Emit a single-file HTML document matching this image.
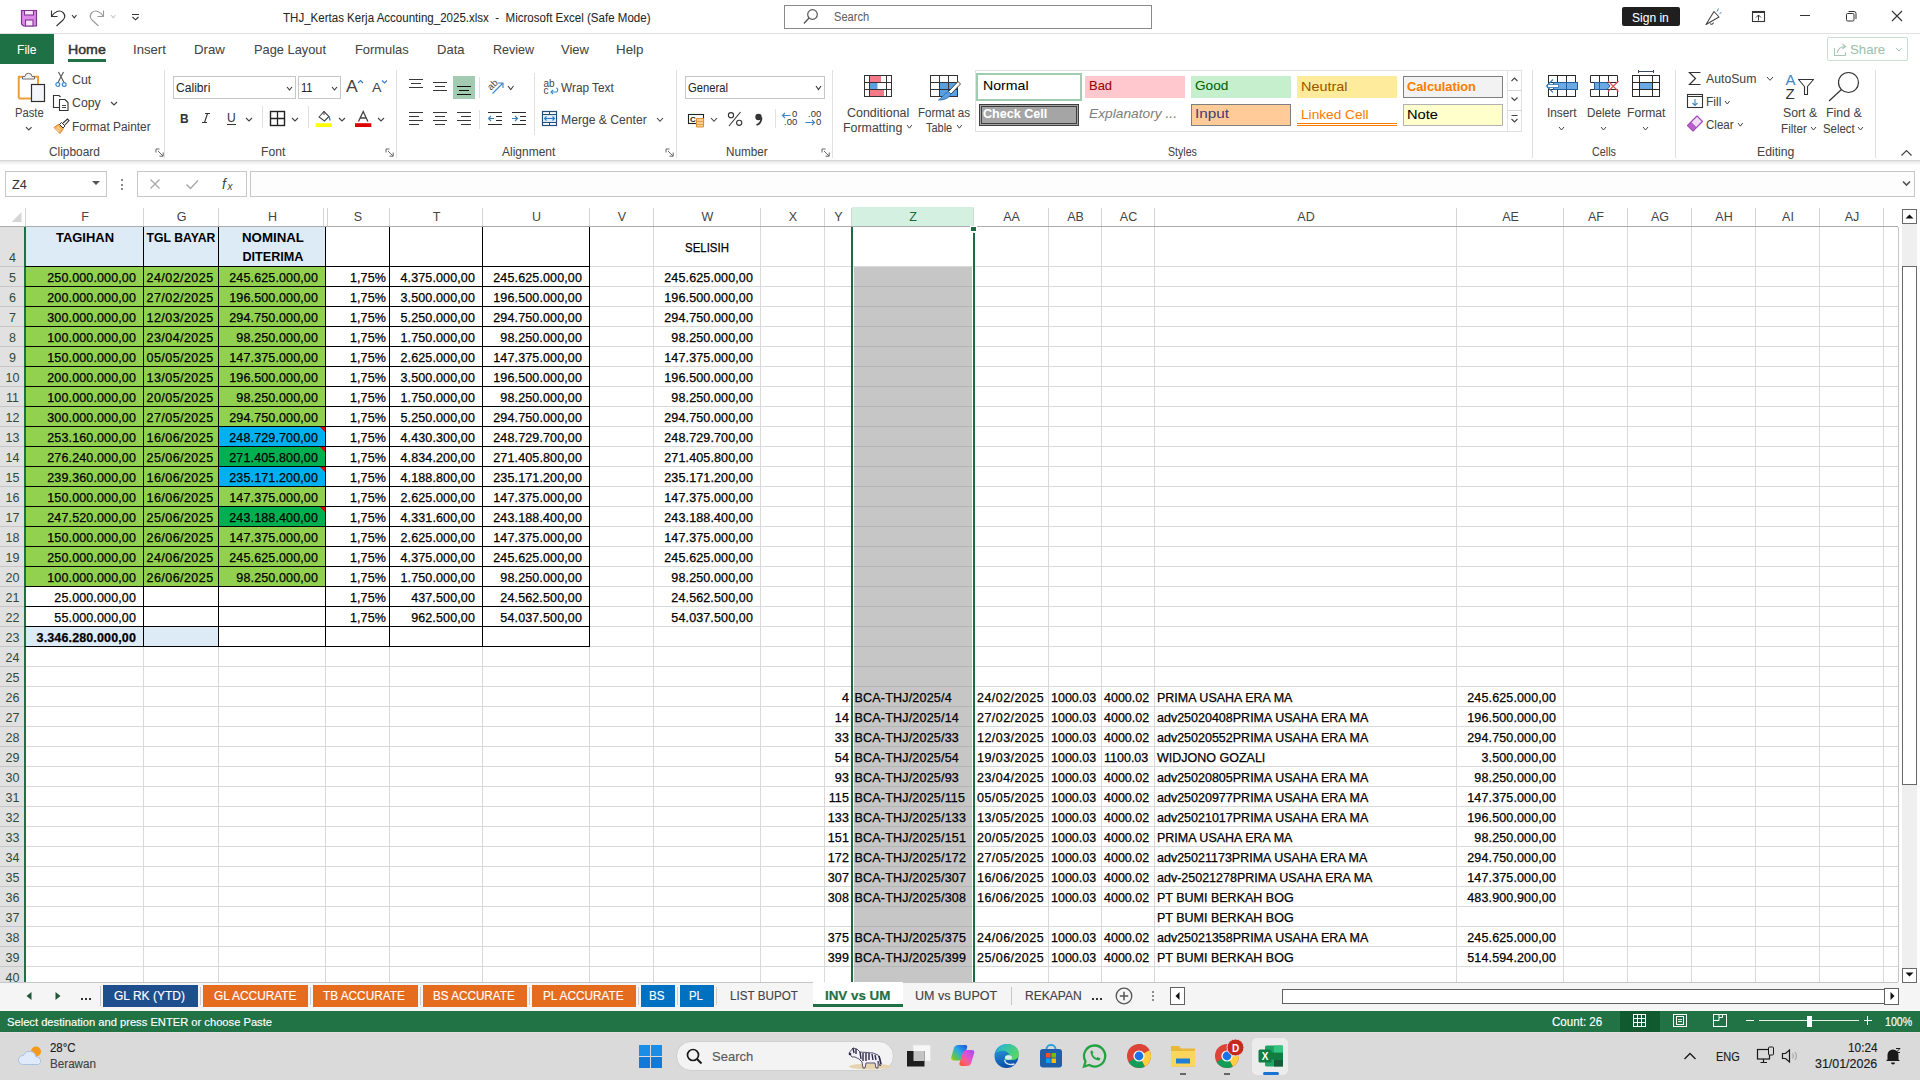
<!DOCTYPE html><html><head><meta charset="utf-8"><title>Excel</title><style>
html,body{margin:0;padding:0;width:1920px;height:1080px;overflow:hidden;background:#fff;font-family:"Liberation Sans",sans-serif;}
.t{position:absolute;white-space:nowrap;}
.r{position:absolute;}
.s{position:absolute;overflow:visible;}
</style></head><body>
<div class="r" style="left:0px;top:0px;width:1920px;height:33px;background:#ffffff;"></div>
<div class="r" style="left:0px;top:33px;width:1920px;height:1px;background:#e1e1e1;"></div>
<svg class="s" style="left:20px;top:9px;" width="18" height="18" viewBox="0 0 18 18"><path d="M1.5 1.5h15v15.5h-13l-2-2z" fill="#dc8ae8" stroke="#7e3590" stroke-width="1.2"/><rect x="4.5" y="1.5" width="9" height="4.5" fill="#f7e6f9" stroke="#7e3590" stroke-width="1.1"/><rect x="5.5" y="11" width="7.5" height="6" fill="#f7e6f9" stroke="#7e3590" stroke-width="1.1"/></svg>
<svg class="s" style="left:49px;top:8px;" width="18" height="20" viewBox="0 0 18 20"><path d="M2.5 2.5V8.5H8.5" fill="none" stroke="#333" stroke-width="1.1"/><path d="M2.5 8.5C5.5 3.5 10.5 1.5 14 4.5 16.5 7 16 10 14 12L7.5 18" fill="none" stroke="#333" stroke-width="1.1"/></svg>
<svg class="s" style="left:70.5px;top:14px;" width="6.5" height="4.8" viewBox="0 0 6.5 4.8"><path d="M1 1l2.25 2.8 2.25 -2.8" fill="none" stroke="#333" stroke-width="1.1"/></svg>
<svg class="s" style="left:88px;top:8px;" width="18" height="20" viewBox="0 0 18 20"><path d="M15.5 2.5V8.5H9.5" fill="none" stroke="#9a9a9a" stroke-width="1.1"/><path d="M15.5 8.5C12.5 3.5 7.5 1.5 4 4.5 1.5 7 2 10 4 12L10.5 18" fill="none" stroke="#9a9a9a" stroke-width="1.1"/></svg>
<svg class="s" style="left:109.5px;top:14px;" width="6.5" height="4.8" viewBox="0 0 6.5 4.8"><path d="M1 1l2.25 2.8 2.25 -2.8" fill="none" stroke="#c8c8c8" stroke-width="1.1"/></svg>
<svg class="s" style="left:131px;top:13px;" width="9" height="8" viewBox="0 0 9 8"><path d="M1 1.5h7" stroke="#333" stroke-width="1"/><path d="M1.5 4l3 2.8 3-2.8" fill="none" stroke="#333" stroke-width="1.1"/></svg>
<div class="t" id="f1" style="left:283px;top:12.00px;font-size:12px;line-height:12px;color:#262626;transform:scaleX(0.9616);transform-origin:0 0;white-space:pre;-webkit-text-stroke:0.05px currentColor;">THJ_Kertas Kerja Accounting_2025.xlsx  -  Microsoft Excel (Safe Mode)</div>
<div class="r" style="left:784px;top:5px;width:368px;height:24px;background:#ffffff;border:1px solid #8a8a8a;box-sizing:border-box;"></div>
<svg class="s" style="left:802px;top:8px;" width="17" height="17" viewBox="0 0 17 17"><circle cx="10.5" cy="6.5" r="4.8" fill="none" stroke="#555" stroke-width="1.2"/><path d="M7 10L2 15.5" stroke="#555" stroke-width="1.3"/></svg>
<div class="t" id="f2" style="left:833.6999999999999px;top:11.00px;font-size:12px;line-height:12px;color:#606060;transform:scaleX(0.9256);transform-origin:0 0;-webkit-text-stroke:0.05px currentColor;">Search</div>
<div class="r" style="left:1622px;top:7px;width:58px;height:19px;background:#1f1f1f;border-radius:2px;"></div>
<div class="t" id="f3" style="left:1632.1000000000001px;top:12.00px;font-size:12.5px;line-height:12.5px;color:#ffffff;transform:scaleX(0.9625);transform-origin:0 0;-webkit-text-stroke:0.05px currentColor;">Sign in</div>
<svg class="s" style="left:1704px;top:8px;" width="20" height="19" viewBox="0 0 20 19"><path d="M2 16.5L10 3.5l5 5.5z" fill="none" stroke="#444" stroke-width="1.1" stroke-linejoin="round"/><path d="M6 15.5a2 2 0 0 0 3.5-1" fill="none" stroke="#444" stroke-width="1.1"/><path d="M13 3.5l1.2-2M15.5 5.5l2-1M14 1.5l.5-1" stroke="#3a86c8" stroke-width="1"/></svg>
<svg class="s" style="left:1751px;top:10px;" width="15" height="13" viewBox="0 0 15 13"><rect x="1.5" y="1.5" width="12" height="10" fill="none" stroke="#333" stroke-width="1.1"/><path d="M1.5 2.5h12" stroke="#333" stroke-width="1"/><path d="M7.5 10.5V5M5 7.5l2.5-2.5 2.5 2.5" fill="none" stroke="#333" stroke-width="1"/></svg>
<div class="r" style="left:1800px;top:15px;width:10px;height:1px;background:#333;"></div>
<svg class="s" style="left:1845px;top:10px;" width="12" height="12" viewBox="0 0 12 12"><rect x="1.5" y="3.5" width="7.5" height="7.5" rx="1.2" fill="none" stroke="#333" stroke-width="1"/><path d="M3.5 1.5h5.5a2 2 0 0 1 2 2v5.5" fill="none" stroke="#333" stroke-width="1"/></svg>
<svg class="s" style="left:1891px;top:10px;" width="12" height="12" viewBox="0 0 12 12"><path d="M1 1l10 10M11 1L1 11" stroke="#333" stroke-width="1.1"/></svg>
<div class="r" style="left:0px;top:34px;width:1920px;height:30px;background:#ffffff;"></div>
<div class="r" style="left:0px;top:34px;width:54px;height:30px;background:#1e7145;"></div>
<div class="t" id="f4" style="left:16.9px;top:43.00px;font-size:13px;line-height:13px;color:#ffffff;transform:scaleX(0.9306);transform-origin:0 0;-webkit-text-stroke:0.05px currentColor;">File</div>
<div class="t" id="f5" style="left:67.5px;top:43.00px;font-size:13px;line-height:13px;color:#333333;transform:scaleX(1.0897);transform-origin:0 0;-webkit-text-stroke:0.05px currentColor;-webkit-text-stroke:0.45px #333;">Home</div>
<div class="t" id="f6" style="left:132.9px;top:43.00px;font-size:13px;line-height:13px;color:#444444;transform:scaleX(1.0087);transform-origin:0 0;-webkit-text-stroke:0.05px currentColor;">Insert</div>
<div class="t" id="f7" style="left:193.70000000000002px;top:43.00px;font-size:13px;line-height:13px;color:#444444;transform:scaleX(1.0183);transform-origin:0 0;-webkit-text-stroke:0.05px currentColor;">Draw</div>
<div class="t" id="f8" style="left:253.6px;top:43.00px;font-size:13px;line-height:13px;color:#444444;transform:scaleX(0.9861);transform-origin:0 0;-webkit-text-stroke:0.05px currentColor;">Page Layout</div>
<div class="t" id="f9" style="left:354.7px;top:43.00px;font-size:13px;line-height:13px;color:#444444;transform:scaleX(0.9910);transform-origin:0 0;-webkit-text-stroke:0.05px currentColor;">Formulas</div>
<div class="t" id="f10" style="left:436.59999999999997px;top:43.00px;font-size:13px;line-height:13px;color:#444444;transform:scaleX(1.0011);transform-origin:0 0;-webkit-text-stroke:0.05px currentColor;">Data</div>
<div class="t" id="f11" style="left:492.9px;top:43.00px;font-size:13px;line-height:13px;color:#444444;transform:scaleX(0.9619);transform-origin:0 0;-webkit-text-stroke:0.05px currentColor;">Review</div>
<div class="t" id="f12" style="left:560.9px;top:43.00px;font-size:13px;line-height:13px;color:#444444;transform:scaleX(1.0017);transform-origin:0 0;-webkit-text-stroke:0.05px currentColor;">View</div>
<div class="t" id="f13" style="left:615.8px;top:43.00px;font-size:13px;line-height:13px;color:#444444;transform:scaleX(1.0280);transform-origin:0 0;-webkit-text-stroke:0.05px currentColor;">Help</div>
<div class="r" style="left:68px;top:59px;width:38px;height:3px;background:#1e7145;"></div>
<div class="r" style="left:1827px;top:37px;width:81px;height:24px;background:#ffffff;border:1px solid #c9e0d1;box-sizing:border-box;border-radius:2px;"></div>
<svg class="s" style="left:1833px;top:42px;" width="16" height="15" viewBox="0 0 16 15"><path d="M1.5 6v7.5h11V10" fill="none" stroke="#a9c8b4" stroke-width="1.1"/><path d="M4 11c1-4 4-6.5 8-6.5M9.5 2L12.5 4.5 9.5 7" fill="none" stroke="#a9c8b4" stroke-width="1.1"/></svg>
<div class="t" id="f14" style="left:1850.4px;top:43.00px;font-size:13px;line-height:13px;color:#9cc2aa;transform:scaleX(1.0143);transform-origin:0 0;-webkit-text-stroke:0.05px currentColor;">Share</div>
<svg class="s" style="left:1895px;top:47px;" width="8" height="5" viewBox="0 0 8 5"><path d="M1 1l3.0 3 3.0 -3" fill="none" stroke="#a9c8b4" stroke-width="1"/></svg>
<div class="r" style="left:0px;top:64px;width:1920px;height:96px;background:#ffffff;"></div>
<div class="r" style="left:0px;top:160px;width:1920px;height:1px;background:#d6d6d6;"></div>
<div class="r" style="left:0px;top:161px;width:1920px;height:4px;background:linear-gradient(#e6e6e6,#ffffff);"></div>
<div class="r" style="left:164px;top:70px;width:1px;height:88px;background:#e1e1e1;"></div>
<div class="r" style="left:396px;top:70px;width:1px;height:88px;background:#e1e1e1;"></div>
<div class="r" style="left:676px;top:70px;width:1px;height:88px;background:#e1e1e1;"></div>
<div class="r" style="left:832px;top:70px;width:1px;height:88px;background:#e1e1e1;"></div>
<div class="r" style="left:1532px;top:70px;width:1px;height:88px;background:#e1e1e1;"></div>
<div class="r" style="left:1675px;top:70px;width:1px;height:88px;background:#e1e1e1;"></div>
<div class="r" style="left:1875px;top:70px;width:1px;height:88px;background:#e1e1e1;"></div>
<div class="t" id="f15" style="left:49.15px;top:146.00px;font-size:12.5px;line-height:12.5px;color:#444444;transform:scaleX(0.9502);transform-origin:0 0;-webkit-text-stroke:0.05px currentColor;">Clipboard</div>
<div class="t" id="f16" style="left:261.29999999999995px;top:146.00px;font-size:12.5px;line-height:12.5px;color:#444444;transform:scaleX(0.9714);transform-origin:0 0;-webkit-text-stroke:0.05px currentColor;">Font</div>
<div class="t" id="f17" style="left:501.9px;top:146.00px;font-size:12.5px;line-height:12.5px;color:#444444;transform:scaleX(0.9587);transform-origin:0 0;-webkit-text-stroke:0.05px currentColor;">Alignment</div>
<div class="t" id="f18" style="left:725.9px;top:146.00px;font-size:12.5px;line-height:12.5px;color:#444444;transform:scaleX(0.9355);transform-origin:0 0;-webkit-text-stroke:0.05px currentColor;">Number</div>
<div class="t" id="f19" style="left:1167.7px;top:146.00px;font-size:12.5px;line-height:12.5px;color:#444444;transform:scaleX(0.8488);transform-origin:0 0;-webkit-text-stroke:0.05px currentColor;">Styles</div>
<div class="t" id="f20" style="left:1592.0px;top:146.00px;font-size:12.5px;line-height:12.5px;color:#444444;transform:scaleX(0.8598);transform-origin:0 0;-webkit-text-stroke:0.05px currentColor;">Cells</div>
<div class="t" id="f21" style="left:1756.9px;top:146.00px;font-size:12.5px;line-height:12.5px;color:#444444;transform:scaleX(0.9782);transform-origin:0 0;-webkit-text-stroke:0.05px currentColor;">Editing</div>
<svg class="s" style="left:154.5px;top:148px;" width="10" height="9" viewBox="0 0 10 9"><path d="M1 4.5V1h3.5" fill="none" stroke="#666" stroke-width="1"/><path d="M3 3l5 5M4.5 8.2h3.7V4.5" fill="none" stroke="#666" stroke-width="1"/></svg>
<svg class="s" style="left:385px;top:148px;" width="10" height="9" viewBox="0 0 10 9"><path d="M1 4.5V1h3.5" fill="none" stroke="#666" stroke-width="1"/><path d="M3 3l5 5M4.5 8.2h3.7V4.5" fill="none" stroke="#666" stroke-width="1"/></svg>
<svg class="s" style="left:665px;top:148px;" width="10" height="9" viewBox="0 0 10 9"><path d="M1 4.5V1h3.5" fill="none" stroke="#666" stroke-width="1"/><path d="M3 3l5 5M4.5 8.2h3.7V4.5" fill="none" stroke="#666" stroke-width="1"/></svg>
<svg class="s" style="left:821px;top:148px;" width="10" height="9" viewBox="0 0 10 9"><path d="M1 4.5V1h3.5" fill="none" stroke="#666" stroke-width="1"/><path d="M3 3l5 5M4.5 8.2h3.7V4.5" fill="none" stroke="#666" stroke-width="1"/></svg>
<svg class="s" style="left:1900px;top:149px;" width="13" height="8" viewBox="0 0 13 8"><path d="M1.5 6.5l5-5 5 5" fill="none" stroke="#444" stroke-width="1.2"/></svg>
<svg class="s" style="left:12px;top:70px;" width="36" height="36" viewBox="0 0 36 36"><path d="M6.75 28.5V6.75h4.5M21.5 6.75h4.5v7.5" fill="none" stroke="#e9a13b" stroke-width="2"/><path d="M6.75 28.5h12.5" fill="none" stroke="#e9a13b" stroke-width="2"/><path d="M10.5 9V6.5h2.5a3.5 3.2 0 0 1 7 0h2.5V9z" fill="#f2f2f2" stroke="#6a6a6a" stroke-width="1"/><rect x="19.5" y="14.5" width="13" height="17" fill="#f4f4fb" stroke="#2e2e2e" stroke-width="1.2"/></svg>
<div class="t" id="f22" style="left:15.0px;top:107.00px;font-size:12.5px;line-height:12.5px;color:#444444;transform:scaleX(0.8978);transform-origin:0 0;-webkit-text-stroke:0.05px currentColor;">Paste</div>
<svg class="s" style="left:24.6px;top:126px;" width="7.6" height="5" viewBox="0 0 7.6 5"><path d="M1 1l2.8 3 2.8 -3" fill="none" stroke="#444" stroke-width="1.1"/></svg>
<svg class="s" style="left:55px;top:71px;" width="12" height="17" viewBox="0 0 12 17"><path d="M3.5 1l5.5 10.5M8.5 1L3 11.5" stroke="#555" stroke-width="1.1"/><circle cx="2.8" cy="13.5" r="1.9" fill="none" stroke="#3a86c8" stroke-width="1.2"/><circle cx="9.2" cy="13.5" r="1.9" fill="none" stroke="#3a86c8" stroke-width="1.2"/></svg>
<div class="t" id="f23" style="left:71.9px;top:74.00px;font-size:12.5px;line-height:12.5px;color:#444444;transform:scaleX(0.9921);transform-origin:0 0;-webkit-text-stroke:0.05px currentColor;">Cut</div>
<svg class="s" style="left:52px;top:94px;" width="18" height="18" viewBox="0 0 18 18"><path d="M7.5 13.5H1.5V1.5h5.5l1.5 1.5" fill="none" stroke="#333" stroke-width="1.1"/><path d="M7.5 5.5h5.5l3 3v8h-8.5z" fill="#fff" stroke="#333" stroke-width="1.1"/><path d="M10 11.5h4M10 13.5h4" stroke="#333" stroke-width="0.9"/></svg>
<div class="t" id="f24" style="left:71.9px;top:97.00px;font-size:12.5px;line-height:12.5px;color:#444444;transform:scaleX(0.9833);transform-origin:0 0;-webkit-text-stroke:0.05px currentColor;">Copy</div>
<svg class="s" style="left:109.6px;top:101px;" width="8" height="5" viewBox="0 0 8 5"><path d="M1 1l3.0 3 3.0 -3" fill="none" stroke="#444" stroke-width="1.1"/></svg>
<svg class="s" style="left:53px;top:118px;" width="17" height="16" viewBox="0 0 17 16"><path d="M1 9.5l5-3.5 4.5 4.5-3.5 5z" fill="#f3b25a" stroke="#e08a2a" stroke-width="1"/><path d="M3 10.5l3 3M4.5 9l2.5 2.5" stroke="#fff" stroke-width="0.8"/><path d="M6.5 6.5l2-2 3.5 3.5-2 2z" fill="#fff" stroke="#333" stroke-width="1"/><path d="M10 5l4.5-4 1.5 1.5-4 4.5" fill="none" stroke="#333" stroke-width="1.1"/></svg>
<div class="t" id="f25" style="left:71.9px;top:121.00px;font-size:12.5px;line-height:12.5px;color:#444444;transform:scaleX(0.9520);transform-origin:0 0;-webkit-text-stroke:0.05px currentColor;">Format Painter</div>
<div class="r" style="left:173px;top:76px;width:123px;height:23px;background:#fff;border:1px solid #c6c6c6;box-sizing:border-box;"></div>
<div class="t" id="f26" style="left:176.0px;top:82.00px;font-size:12.5px;line-height:12.5px;color:#262626;transform:scaleX(0.9693);transform-origin:0 0;-webkit-text-stroke:0.05px currentColor;">Calibri</div>
<svg class="s" style="left:286px;top:85.5px;" width="7" height="5" viewBox="0 0 7 5"><path d="M1 1l2.5 3 2.5 -3" fill="none" stroke="#333" stroke-width="1.1"/></svg>
<div class="r" style="left:298px;top:76px;width:43px;height:23px;background:#fff;border:1px solid #c6c6c6;box-sizing:border-box;"></div>
<div class="t" id="f27" style="left:301.0px;top:82.00px;font-size:12.5px;line-height:12.5px;color:#262626;transform:scaleX(0.8857);transform-origin:0 0;-webkit-text-stroke:0.05px currentColor;">11</div>
<svg class="s" style="left:331px;top:85.5px;" width="7" height="5" viewBox="0 0 7 5"><path d="M1 1l2.5 3 2.5 -3" fill="none" stroke="#333" stroke-width="1.1"/></svg>
<div class="t" id="f28" style="left:346.4px;top:78.00px;font-size:16.5px;line-height:16.5px;color:#444;transform:scaleX(1.0621);transform-origin:0 0;-webkit-text-stroke:0.05px currentColor;">A</div>
<svg class="s" style="left:357px;top:79px;" width="7" height="5" viewBox="0 0 7 5"><path d="M1 4l2.5-2.5L6 4" fill="none" stroke="#3a7cc0" stroke-width="1.1"/></svg>
<div class="t" id="f29" style="left:372.4px;top:82.00px;font-size:12.5px;line-height:12.5px;color:#444;transform:scaleX(1.1326);transform-origin:0 0;-webkit-text-stroke:0.05px currentColor;">A</div>
<svg class="s" style="left:380.5px;top:79px;" width="7" height="5" viewBox="0 0 7 5"><path d="M1 1.5l2.5 2.5L6 1.5" fill="none" stroke="#3a7cc0" stroke-width="1.1"/></svg>
<div class="t" id="f30" style="left:180.0px;top:112.00px;font-size:13px;line-height:13px;color:#333;font-weight:bold;transform:scaleX(0.9158);transform-origin:0 0;-webkit-text-stroke:0.05px currentColor;">B</div>
<svg class="s" style="left:200px;top:112px;" width="12" height="12" viewBox="0 0 12 12"><path d="M5 1.5h5M2 10.5h5M7.5 1.5L4.5 10.5" fill="none" stroke="#333" stroke-width="1.1"/></svg>
<div class="t" id="f31" style="left:226.9px;top:112.00px;font-size:12.5px;line-height:12.5px;color:#333;transform:scaleX(0.9633);transform-origin:0 0;-webkit-text-stroke:0.05px currentColor;">U</div>
<div class="r" style="left:227px;top:124px;width:9px;height:1px;background:#333;"></div>
<svg class="s" style="left:245px;top:116.6px;" width="8" height="5" viewBox="0 0 8 5"><path d="M1 1l3.0 3 3.0 -3" fill="none" stroke="#444" stroke-width="1.1"/></svg>
<div class="r" style="left:262px;top:106px;width:1px;height:22px;background:#e1e1e1;"></div>
<svg class="s" style="left:269px;top:110px;" width="17" height="17" viewBox="0 0 17 17"><rect x="1.5" y="1.5" width="14" height="14" fill="none" stroke="#222" stroke-width="1.4"/><path d="M8.5 1.5v14M1.5 8.5h14" stroke="#222" stroke-width="1.3"/></svg>
<svg class="s" style="left:291px;top:116.6px;" width="8" height="5" viewBox="0 0 8 5"><path d="M1 1l3.0 3 3.0 -3" fill="none" stroke="#444" stroke-width="1.1"/></svg>
<div class="r" style="left:308px;top:106px;width:1px;height:22px;background:#e1e1e1;"></div>
<svg class="s" style="left:315px;top:109px;" width="18" height="19" viewBox="0 0 18 19"><path d="M4 8l5-5.5 5 5-4.5 4.5z" fill="none" stroke="#444" stroke-width="1.1"/><path d="M9 2v4" stroke="#444" stroke-width="1"/><path d="M13.5 7.5c1.5 1 1.5 3 1.5 4" fill="none" stroke="#2c5fa8" stroke-width="1.2"/><rect x="0.6" y="14.2" width="16.3" height="3.8" fill="#ffff00"/></svg>
<svg class="s" style="left:338px;top:116.6px;" width="8" height="5" viewBox="0 0 8 5"><path d="M1 1l3.0 3 3.0 -3" fill="none" stroke="#444" stroke-width="1.1"/></svg>
<svg class="s" style="left:355px;top:110px;" width="17" height="18" viewBox="0 0 17 18"><path d="M3.5 11.5L8.2 1.5 12.9 11.5M5.3 8h5.8" fill="none" stroke="#444" stroke-width="1.3"/><rect x="0" y="13.2" width="16.3" height="3.8" fill="#e00000"/></svg>
<svg class="s" style="left:377px;top:116.6px;" width="8" height="5" viewBox="0 0 8 5"><path d="M1 1l3.0 3 3.0 -3" fill="none" stroke="#444" stroke-width="1.1"/></svg>
<div class="r" style="left:409px;top:79px;width:14px;height:1px;background:#3a3a3a;"></div>
<div class="r" style="left:411px;top:83px;width:10px;height:1px;background:#3a3a3a;"></div>
<div class="r" style="left:409px;top:87px;width:14px;height:1px;background:#3a3a3a;"></div>
<div class="r" style="left:433px;top:82px;width:14px;height:1px;background:#3a3a3a;"></div>
<div class="r" style="left:435px;top:86px;width:10px;height:1px;background:#3a3a3a;"></div>
<div class="r" style="left:433px;top:90px;width:14px;height:1px;background:#3a3a3a;"></div>
<div class="r" style="left:453px;top:76px;width:22px;height:23px;background:#a2cbb1;"></div>
<div class="r" style="left:457px;top:86px;width:14px;height:1px;background:#111;"></div>
<div class="r" style="left:459px;top:90px;width:10px;height:1px;background:#111;"></div>
<div class="r" style="left:457px;top:94px;width:14px;height:1px;background:#111;"></div>
<div class="r" style="left:479px;top:77px;width:1px;height:21px;background:#e1e1e1;"></div>
<svg class="s" style="left:485px;top:77px;" width="20" height="18" viewBox="0 0 20 18"><text x="2" y="12" font-size="9.5" fill="#444" transform="rotate(-45 6 8)" font-family="Liberation Sans">ab</text><path d="M7.5 16.5L17.5 6.5M13 6h5v5" fill="none" stroke="#3a86c8" stroke-width="1.1"/></svg>
<svg class="s" style="left:507px;top:84.5px;" width="7.5" height="5.5" viewBox="0 0 7.5 5.5"><path d="M1 1l2.75 3.5 2.75 -3.5" fill="none" stroke="#444" stroke-width="1.1"/></svg>
<div class="r" style="left:409px;top:112px;width:14px;height:1px;background:#3a3a3a;"></div>
<div class="r" style="left:409px;top:116px;width:10px;height:1px;background:#3a3a3a;"></div>
<div class="r" style="left:409px;top:120px;width:14px;height:1px;background:#3a3a3a;"></div>
<div class="r" style="left:409px;top:124px;width:10px;height:1px;background:#3a3a3a;"></div>
<div class="r" style="left:433px;top:112px;width:14px;height:1px;background:#3a3a3a;"></div>
<div class="r" style="left:435px;top:116px;width:10px;height:1px;background:#3a3a3a;"></div>
<div class="r" style="left:433px;top:120px;width:14px;height:1px;background:#3a3a3a;"></div>
<div class="r" style="left:435px;top:124px;width:10px;height:1px;background:#3a3a3a;"></div>
<div class="r" style="left:457px;top:112px;width:14px;height:1px;background:#3a3a3a;"></div>
<div class="r" style="left:461px;top:116px;width:10px;height:1px;background:#3a3a3a;"></div>
<div class="r" style="left:457px;top:120px;width:14px;height:1px;background:#3a3a3a;"></div>
<div class="r" style="left:461px;top:124px;width:10px;height:1px;background:#3a3a3a;"></div>
<div class="r" style="left:479px;top:110px;width:1px;height:19px;background:#e1e1e1;"></div>
<svg class="s" style="left:487px;top:110px;" width="17" height="17" viewBox="0 0 17 17"><path d="M1 2.5h14M9 6.5h6M9 10.5h6M1 14.5h14" stroke="#2a2a2a" stroke-width="1"/><path d="M7 8.5H1.5M4 6l-2.5 2.5L4 11" fill="none" stroke="#3a7fb8" stroke-width="1.1"/></svg>
<svg class="s" style="left:511px;top:110px;" width="17" height="17" viewBox="0 0 17 17"><path d="M1 2.5h14M9 6.5h6M9 10.5h6M1 14.5h14" stroke="#2a2a2a" stroke-width="1"/><path d="M1 8.5h5.5M4 6l2.5 2.5L4 11" fill="none" stroke="#3a7fb8" stroke-width="1.1"/></svg>
<div class="r" style="left:534px;top:73px;width:1px;height:62px;background:#e1e1e1;"></div>
<svg class="s" style="left:543px;top:78px;" width="17" height="17" viewBox="0 0 17 17"><text x="0.5" y="9" font-size="10" fill="#444" font-family="Liberation Sans">ab</text><text x="0.5" y="16" font-size="10" fill="#444" font-family="Liberation Sans">c</text><path d="M13 10c2 0 2.5 3 .5 4h-5.5" fill="none" stroke="#3a86c8" stroke-width="1.1"/><path d="M10 12l-2 2 2 2" fill="none" stroke="#3a86c8" stroke-width="1.1"/></svg>
<div class="t" id="f32" style="left:560.8px;top:82.00px;font-size:12.5px;line-height:12.5px;color:#444444;transform:scaleX(0.9460);transform-origin:0 0;-webkit-text-stroke:0.05px currentColor;">Wrap Text</div>
<svg class="s" style="left:541px;top:110px;" width="17" height="17" viewBox="0 0 17 17"><rect x="1.5" y="1.5" width="14" height="14" fill="#ffffff" stroke="#234e78" stroke-width="1.2"/><rect x="2" y="5" width="13" height="7" fill="#dcebf7"/><path d="M1.5 4.5h14M1.5 12.5h14M8.5 1.5v3M8.5 12.5v3" stroke="#234e78" stroke-width="1"/><path d="M3.5 8.5h10M5.5 6.5l-2 2 2 2M11.5 6.5l2 2-2 2" fill="none" stroke="#2c7cc8" stroke-width="1.1"/></svg>
<div class="t" id="f33" style="left:560.8px;top:114.00px;font-size:12.5px;line-height:12.5px;color:#444444;transform:scaleX(0.9724);transform-origin:0 0;-webkit-text-stroke:0.05px currentColor;">Merge &amp; Center</div>
<svg class="s" style="left:655.6px;top:116.6px;" width="8" height="5.3" viewBox="0 0 8 5.3"><path d="M1 1l3.0 3.3 3.0 -3.3" fill="none" stroke="#444" stroke-width="1.1"/></svg>
<div class="r" style="left:685px;top:76px;width:140px;height:23px;background:#fff;border:1px solid #c6c6c6;box-sizing:border-box;"></div>
<div class="t" id="f34" style="left:688.0px;top:82.00px;font-size:12.5px;line-height:12.5px;color:#262626;transform:scaleX(0.8981);transform-origin:0 0;-webkit-text-stroke:0.05px currentColor;">General</div>
<svg class="s" style="left:815px;top:85.2px;" width="7" height="5.5" viewBox="0 0 7 5.5"><path d="M1 1l2.5 3.5 2.5 -3.5" fill="none" stroke="#333" stroke-width="1.1"/></svg>
<svg class="s" style="left:686px;top:112px;" width="19" height="16" viewBox="0 0 19 16"><rect x="2.5" y="2.5" width="15" height="9" fill="#fff" stroke="#222" stroke-width="1.1"/><text x="4" y="10" font-size="8" fill="#222" font-family="Liberation Sans" font-weight="bold">C</text><path d="M10.5 6.5h7v8.5h-7z" fill="#f8cf95" stroke="#e0912f" stroke-width="1" stroke-linejoin="round"/><path d="M10.5 9.5h7M10.5 12.5h7" stroke="#e0912f" stroke-width="0.8"/></svg>
<svg class="s" style="left:710px;top:116.7px;" width="8" height="5.3" viewBox="0 0 8 5.3"><path d="M1 1l3.0 3.3 3.0 -3.3" fill="none" stroke="#444" stroke-width="1.1"/></svg>
<svg class="s" style="left:726px;top:110px;" width="18" height="18" viewBox="0 0 18 18"><circle cx="5" cy="5.2" r="2.6" fill="none" stroke="#333" stroke-width="1.1"/><circle cx="13.2" cy="12.8" r="2.6" fill="none" stroke="#333" stroke-width="1.1"/><path d="M14.5 2L3 16" stroke="#333" stroke-width="1.1"/></svg>
<svg class="s" style="left:754px;top:112px;" width="10" height="14" viewBox="0 0 10 14"><circle cx="4.5" cy="5" r="3.2" fill="#333"/><path d="M7.5 5.5c0 4-2 6.5-5 7.5" fill="none" stroke="#333" stroke-width="1.8"/></svg>
<div class="r" style="left:775px;top:109px;width:1px;height:19px;background:#e1e1e1;"></div>
<svg class="s" style="left:780px;top:108px;" width="20" height="19" viewBox="0 0 20 19"><text x="12" y="9" font-size="9.5" fill="#333" font-family="Liberation Sans">0</text><text x="4" y="17.2" font-size="9.5" fill="#333" font-family="Liberation Sans">.00</text><path d="M2.5 7.5h8M5 5L2.5 7.5 5 10" fill="none" stroke="#3a86c8" stroke-width="1.1"/></svg>
<svg class="s" style="left:804px;top:108px;" width="20" height="19" viewBox="0 0 20 19"><text x="4" y="9" font-size="9.5" fill="#333" font-family="Liberation Sans">.00</text><text x="12" y="17.2" font-size="9.5" fill="#333" font-family="Liberation Sans">0</text><path d="M1.5 14.5h9M8 12l2.5 2.5L8 17" fill="none" stroke="#3a86c8" stroke-width="1.1"/></svg>
<svg class="s" style="left:864px;top:75px;" width="29" height="23" viewBox="0 0 29 23"><rect x="0.5" y="0.5" width="27" height="21" fill="#fff"/><rect x="6" y="1" width="11" height="6.5" fill="#f47a87"/><rect x="6" y="8" width="7.5" height="6.5" fill="#5aa0e0"/><rect x="6" y="15" width="14" height="6.5" fill="#f47a87"/><path d="M5.5 0.5v21M22.5 0.5v21M0.5 7.5h27M0.5 14.5h27" stroke="#333" stroke-width="1"/><rect x="0.5" y="0.5" width="27" height="21" fill="none" stroke="#333" stroke-width="1"/></svg>
<div class="t" id="f35" style="left:847.1px;top:107.00px;font-size:12.5px;line-height:12.5px;color:#444444;transform:scaleX(0.9961);transform-origin:0 0;-webkit-text-stroke:0.05px currentColor;">Conditional</div>
<div class="t" id="f36" style="left:843.1px;top:122.00px;font-size:12.5px;line-height:12.5px;color:#444444;transform:scaleX(0.9925);transform-origin:0 0;-webkit-text-stroke:0.05px currentColor;">Formatting</div>
<svg class="s" style="left:905.7px;top:123.6px;" width="6.8" height="5.2" viewBox="0 0 6.8 5.2"><path d="M1 1l2.4 3.2 2.4 -3.2" fill="none" stroke="#444" stroke-width="1"/></svg>
<svg class="s" style="left:930px;top:75px;" width="32" height="27" viewBox="0 0 32 27"><rect x="0.5" y="0.5" width="27" height="21" fill="#fff"/><rect x="10" y="8" width="17.5" height="13.5" fill="#5aa0e0"/><path d="M9.5 0.5v21M18.5 0.5v21M0.5 7.5h27M0.5 14.5h27" stroke="#333" stroke-width="1"/><rect x="0.5" y="0.5" width="27" height="21" fill="none" stroke="#333" stroke-width="1"/><path d="M28 6.5l2.5 2.5-9.5 10-2.5-2.5z" fill="#fff" stroke="#333" stroke-width="0.9" stroke-linejoin="round"/><path d="M18.5 16.5l2.5 2.5c-2 4-6 6-12.5 6 3.5-2 5.5-6.5 10-8.5z" fill="#5aa0e0" stroke="#2c6fb0" stroke-width="0.9"/></svg>
<div class="t" id="f37" style="left:918.1999999999999px;top:107.00px;font-size:12.5px;line-height:12.5px;color:#444444;transform:scaleX(0.9260);transform-origin:0 0;-webkit-text-stroke:0.05px currentColor;">Format as</div>
<div class="t" id="f38" style="left:926.3px;top:122.00px;font-size:12.5px;line-height:12.5px;color:#444444;transform:scaleX(0.8765);transform-origin:0 0;-webkit-text-stroke:0.05px currentColor;">Table</div>
<svg class="s" style="left:955.75px;top:123.6px;" width="6.8" height="5.2" viewBox="0 0 6.8 5.2"><path d="M1 1l2.4 3.2 2.4 -3.2" fill="none" stroke="#444" stroke-width="1"/></svg>
<div class="r" style="left:975px;top:70px;width:547px;height:62px;background:#ffffff;border:1px solid #e1e1e1;box-sizing:border-box;"></div>
<div class="r" style="left:976px;top:73px;width:106px;height:28px;background:#a0ccb2;"></div>
<div class="r" style="left:978px;top:75px;width:102px;height:24px;background:#ffffff;"></div>
<div class="t" id="f39" style="left:983.3px;top:79.00px;font-size:13px;line-height:13px;color:#000;transform:scaleX(1.0881);transform-origin:0 0;-webkit-text-stroke:0.05px currentColor;">Normal</div>
<div class="r" style="left:1085px;top:76px;width:100px;height:22px;background:#ffc7ce;"></div>
<div class="t" id="f40" style="left:1089.0px;top:79.00px;font-size:13px;line-height:13px;color:#9c0006;transform:scaleX(0.9982);transform-origin:0 0;-webkit-text-stroke:0.05px currentColor;">Bad</div>
<div class="r" style="left:1191px;top:76px;width:100px;height:22px;background:#c6efce;"></div>
<div class="t" id="f41" style="left:1194.7px;top:79.00px;font-size:13px;line-height:13px;color:#006100;transform:scaleX(1.0468);transform-origin:0 0;-webkit-text-stroke:0.05px currentColor;">Good</div>
<div class="r" style="left:1297px;top:76px;width:100px;height:22px;background:#ffeb9c;"></div>
<div class="t" id="f42" style="left:1301.1000000000001px;top:80.00px;font-size:13px;line-height:13px;color:#9c5700;transform:scaleX(1.1092);transform-origin:0 0;-webkit-text-stroke:0.05px currentColor;">Neutral</div>
<div class="r" style="left:1403px;top:76px;width:100px;height:22px;background:#f2f2f2;border:1px solid #7f7f7f;box-sizing:border-box;"></div>
<div class="t" id="f43" style="left:1406.9px;top:80.00px;font-size:13px;line-height:13px;color:#fa7d00;font-weight:bold;transform:scaleX(0.9832);transform-origin:0 0;-webkit-text-stroke:0.05px currentColor;">Calculation</div>
<div class="r" style="left:979px;top:104px;width:100px;height:22px;background:#a5a5a5;border:3px double #3f3f3f;box-sizing:border-box;"></div>
<div class="t" id="f44" style="left:983.0px;top:107.00px;font-size:13px;line-height:13px;color:#ffffff;font-weight:bold;transform:scaleX(0.9656);transform-origin:0 0;-webkit-text-stroke:0.05px currentColor;">Check Cell</div>
<div class="t" id="f45" style="left:1089.0px;top:107.00px;font-size:13px;line-height:13px;color:#7f7f7f;font-style:italic;transform:scaleX(1.0588);transform-origin:0 0;-webkit-text-stroke:0.05px currentColor;">Explanatory ...</div>
<div class="r" style="left:1191px;top:104px;width:100px;height:22px;background:#ffcc99;border:1px solid #7f7f7f;box-sizing:border-box;"></div>
<div class="t" id="f46" style="left:1194.7px;top:107.00px;font-size:13px;line-height:13px;color:#3f3f76;transform:scaleX(1.1756);transform-origin:0 0;-webkit-text-stroke:0.05px currentColor;">Input</div>
<div class="t" id="f47" style="left:1301.1000000000001px;top:108.00px;font-size:13px;line-height:13px;color:#fa7d00;transform:scaleX(1.0509);transform-origin:0 0;-webkit-text-stroke:0.05px currentColor;">Linked Cell</div>
<div class="r" style="left:1297px;top:123px;width:100px;height:1px;background:#fa7d00;"></div>
<div class="r" style="left:1297px;top:125px;width:100px;height:1px;background:#fa7d00;"></div>
<div class="r" style="left:1403px;top:104px;width:100px;height:22px;background:#ffffcc;border:1px solid #b2b2b2;box-sizing:border-box;"></div>
<div class="t" id="f48" style="left:1406.9px;top:108.00px;font-size:13px;line-height:13px;color:#000;transform:scaleX(1.1249);transform-origin:0 0;-webkit-text-stroke:0.05px currentColor;">Note</div>
<div class="r" style="left:1507px;top:70px;width:15px;height:62px;background:#fff;border:1px solid #e1e1e1;box-sizing:border-box;"></div>
<div class="r" style="left:1507px;top:90px;width:15px;height:1px;background:#d6d6d6;"></div>
<div class="r" style="left:1507px;top:110px;width:15px;height:1px;background:#d6d6d6;"></div>
<svg class="s" style="left:1510px;top:76px;" width="9" height="6" viewBox="0 0 9 6"><path d="M1.5 5l3-3 3 3" fill="none" stroke="#444" stroke-width="1.1"/></svg>
<svg class="s" style="left:1510px;top:96px;" width="9" height="6" viewBox="0 0 9 6"><path d="M1.5 1.5l3 3 3-3" fill="none" stroke="#444" stroke-width="1.1"/></svg>
<svg class="s" style="left:1510px;top:114px;" width="9" height="10" viewBox="0 0 9 10"><path d="M1.5 1.5h6M1.5 5l3 3 3-3" fill="none" stroke="#444" stroke-width="1.1"/></svg>
<svg class="s" style="left:1545px;top:70px;" width="34" height="28" viewBox="0 0 34 28"><rect x="3.5" y="5.5" width="27" height="21" fill="#fff" stroke="#2a2a2a" stroke-width="1"/><path d="M12.5 5.5v21M21.5 5.5v21M3.5 12.5h27M3.5 19.5h27" stroke="#2a2a2a" stroke-width="1"/><rect x="8.5" y="12.5" width="24" height="7" fill="#6aa9e4" stroke="#1f5f9e" stroke-width="1"/><path d="M21.5 12.5v7" stroke="#1f5f9e"/><rect x="2.5" y="14.5" width="11" height="3" fill="#ffffff" stroke="#3a7fb8" stroke-width="0.9"/><path d="M8 9.5L1.5 16 8 22.5" fill="none" stroke="#3a7fb8" stroke-width="1.1"/></svg>
<svg class="s" style="left:1587px;top:70px;" width="34" height="28" viewBox="0 0 34 28"><path d="M3.5 12.5v-7h27v7M3.5 19.5v7h27v-7M3.5 12.5h6M3.5 19.5h6M19.5 12.5h11M19.5 19.5h11M12.5 5.5v7M21.5 5.5v7M12.5 19.5v7M21.5 19.5v7" fill="none" stroke="#2a2a2a" stroke-width="1"/><path d="M7.5 12.5h12.5l3 3.5-3 3.5H7.5z" fill="#6aa9e4" stroke="#1f5f9e" stroke-width="1"/><path d="M12.5 12.5v7" stroke="#1f5f9e"/><path d="M21 11l10.5 10.5M31.5 11L21 21.5" stroke="#e05050" stroke-width="1.1"/></svg>
<svg class="s" style="left:1629px;top:66px;" width="34" height="32" viewBox="0 0 34 32"><rect x="3.5" y="9.5" width="27" height="21" fill="#fff" stroke="#2a2a2a" stroke-width="1"/><rect x="11" y="17" width="12" height="6" fill="#6aa9e4"/><path d="M10.5 9.5v21M23.5 9.5v21M3.5 16.5h27M3.5 23.5h27" stroke="#2a2a2a" stroke-width="1"/><path d="M9.5 5.5h15M9.5 4v3M24.5 4v3" stroke="#3a4a5a" stroke-width="1"/></svg>
<div class="t" id="f49" style="left:1546.7px;top:107.00px;font-size:12.5px;line-height:12.5px;color:#444444;transform:scaleX(0.9467);transform-origin:0 0;-webkit-text-stroke:0.05px currentColor;">Insert</div>
<div class="t" id="f50" style="left:1586.9px;top:107.00px;font-size:12.5px;line-height:12.5px;color:#444444;transform:scaleX(0.9325);transform-origin:0 0;-webkit-text-stroke:0.05px currentColor;">Delete</div>
<div class="t" id="f51" style="left:1626.9px;top:107.00px;font-size:12.5px;line-height:12.5px;color:#444444;transform:scaleX(0.9699);transform-origin:0 0;-webkit-text-stroke:0.05px currentColor;">Format</div>
<svg class="s" style="left:1558.0px;top:125.8px;" width="7" height="5" viewBox="0 0 7 5"><path d="M1 1l2.5 3 2.5 -3" fill="none" stroke="#444" stroke-width="1"/></svg>
<svg class="s" style="left:1600.0px;top:125.8px;" width="7" height="5" viewBox="0 0 7 5"><path d="M1 1l2.5 3 2.5 -3" fill="none" stroke="#444" stroke-width="1"/></svg>
<svg class="s" style="left:1641.9px;top:125.8px;" width="7" height="5" viewBox="0 0 7 5"><path d="M1 1l2.5 3 2.5 -3" fill="none" stroke="#444" stroke-width="1"/></svg>
<svg class="s" style="left:1687px;top:70px;" width="16" height="16" viewBox="0 0 16 16"><path d="M13.5 2.5H2.5l6 6-6 6h11" fill="none" stroke="#333" stroke-width="1.2"/></svg>
<div class="t" id="f52" style="left:1705.7px;top:73.00px;font-size:12.5px;line-height:12.5px;color:#444444;transform:scaleX(0.9801);transform-origin:0 0;-webkit-text-stroke:0.05px currentColor;">AutoSum</div>
<svg class="s" style="left:1765.6px;top:75.6px;" width="8" height="5.3" viewBox="0 0 8 5.3"><path d="M1 1l3.0 3.3 3.0 -3.3" fill="none" stroke="#444" stroke-width="1"/></svg>
<svg class="s" style="left:1686px;top:93px;" width="18" height="16" viewBox="0 0 18 16"><rect x="1.5" y="1.5" width="15" height="13" fill="#fff" stroke="#333" stroke-width="1.1"/><path d="M1.5 3.5h15" stroke="#333" stroke-width="1"/><path d="M9 6v6.5M6.5 10l2.5 2.5 2.5-2.5" fill="none" stroke="#3a86c8" stroke-width="1.1"/></svg>
<div class="t" id="f53" style="left:1705.7px;top:96.00px;font-size:12.5px;line-height:12.5px;color:#444444;transform:scaleX(0.9644);transform-origin:0 0;-webkit-text-stroke:0.05px currentColor;">Fill</div>
<svg class="s" style="left:1724.4px;top:100px;" width="6.6" height="5" viewBox="0 0 6.6 5"><path d="M1 1l2.3 3 2.3 -3" fill="none" stroke="#444" stroke-width="1"/></svg>
<svg class="s" style="left:1686px;top:115px;" width="18" height="18" viewBox="0 0 18 18"><path d="M1.5 10.5L11 1l5.5 5.5L7 16z" fill="#f3dcf7" stroke="#a447b8" stroke-width="1.1" stroke-linejoin="round"/><path d="M1.5 10.5L4.8 7.2 10.3 12.7 7 16z" fill="#b760c9" stroke="#a447b8" stroke-width="1"/></svg>
<div class="t" id="f54" style="left:1705.7px;top:119.00px;font-size:12.5px;line-height:12.5px;color:#444444;transform:scaleX(0.9238);transform-origin:0 0;-webkit-text-stroke:0.05px currentColor;">Clear</div>
<svg class="s" style="left:1736.6px;top:121.5px;" width="6.7" height="5.2" viewBox="0 0 6.7 5.2"><path d="M1 1l2.35 3.2 2.35 -3.2" fill="none" stroke="#444" stroke-width="1"/></svg>
<svg class="s" style="left:1784px;top:72px;" width="32" height="30" viewBox="0 0 32 30"><text x="1.5" y="12.5" font-size="15" fill="#3a86c8" font-family="Liberation Sans">A</text><text x="1.5" y="26.5" font-size="15" fill="#333" font-family="Liberation Sans">Z</text><path d="M14.5 7.5h15l-6 7v8h-3v-8z" fill="none" stroke="#333" stroke-width="1.1" stroke-linejoin="round"/></svg>
<div class="t" id="f55" style="left:1782.9px;top:107.00px;font-size:12.5px;line-height:12.5px;color:#444444;transform:scaleX(0.9813);transform-origin:0 0;-webkit-text-stroke:0.05px currentColor;">Sort &amp;</div>
<div class="t" id="f56" style="left:1781.3000000000002px;top:123.00px;font-size:12.5px;line-height:12.5px;color:#444444;transform:scaleX(0.9359);transform-origin:0 0;-webkit-text-stroke:0.05px currentColor;">Filter</div>
<svg class="s" style="left:1810.3px;top:125.5px;" width="7" height="5" viewBox="0 0 7 5"><path d="M1 1l2.5 3 2.5 -3" fill="none" stroke="#444" stroke-width="1"/></svg>
<svg class="s" style="left:1827px;top:71px;" width="33" height="31" viewBox="0 0 33 31"><circle cx="21.5" cy="11.5" r="10" fill="none" stroke="#333" stroke-width="1.2"/><path d="M14.5 18.5L2 30" stroke="#333" stroke-width="1.2"/></svg>
<div class="t" id="f57" style="left:1826.0px;top:107.00px;font-size:12.5px;line-height:12.5px;color:#444444;transform:scaleX(0.9878);transform-origin:0 0;-webkit-text-stroke:0.05px currentColor;">Find &amp;</div>
<div class="t" id="f58" style="left:1822.9px;top:123.00px;font-size:12.5px;line-height:12.5px;color:#444444;transform:scaleX(0.9122);transform-origin:0 0;-webkit-text-stroke:0.05px currentColor;">Select</div>
<svg class="s" style="left:1857px;top:125.5px;" width="7" height="5" viewBox="0 0 7 5"><path d="M1 1l2.5 3 2.5 -3" fill="none" stroke="#444" stroke-width="1"/></svg>
<div class="r" style="left:0px;top:165px;width:1920px;height:43px;background:#ffffff;"></div>
<div class="r" style="left:5px;top:171px;width:102px;height:26px;background:#fff;border:1px solid #c6c6c6;box-sizing:border-box;"></div>
<div class="t" id="f59" style="left:11.6px;top:178.00px;font-size:13px;line-height:13px;color:#333333;transform:scaleX(0.9755);transform-origin:0 0;-webkit-text-stroke:0.05px currentColor;">Z4</div>
<svg class="s" style="left:91px;top:180px;" width="10" height="6" viewBox="0 0 10 6"><path d="M1 1h8l-4 4z" fill="#555"/></svg>
<div class="r" style="left:121px;top:179px;width:2px;height:2px;background:#8a8a8a;"></div>
<div class="r" style="left:121px;top:183.5px;width:2px;height:2px;background:#8a8a8a;"></div>
<div class="r" style="left:121px;top:188px;width:2px;height:2px;background:#8a8a8a;"></div>
<div class="r" style="left:137px;top:171px;width:110px;height:26px;background:#fff;border:1px solid #c6c6c6;box-sizing:border-box;"></div>
<svg class="s" style="left:149px;top:178px;" width="12" height="12" viewBox="0 0 12 12"><path d="M1.5 1.5l9 9M10.5 1.5l-9 9" stroke="#a8a8a8" stroke-width="1.3"/></svg>
<svg class="s" style="left:185px;top:178px;" width="14" height="12" viewBox="0 0 14 12"><path d="M1.5 6.5l4 4 7.5-8" fill="none" stroke="#a8a8a8" stroke-width="1.5"/></svg>
<div class="t" style="left:222px;top:177.00px;font-size:14px;line-height:14px;color:#444;font-style:italic;transform-origin:0 0;font-family:"Liberation Serif",serif;">f</div>
<div class="t" style="left:227.5px;top:182.00px;font-size:10px;line-height:10px;color:#444;font-style:italic;transform-origin:0 0;font-family:"Liberation Serif",serif;">x</div>
<div class="r" style="left:250px;top:171px;width:1665px;height:26px;background:#fdfdfd;border:1px solid #c6c6c6;box-sizing:border-box;"></div>
<svg class="s" style="left:1902px;top:180px;" width="9" height="7" viewBox="0 0 9 7"><path d="M1 1.5l3.5 3.5 3.5-3.5" fill="none" stroke="#555" stroke-width="1.7"/></svg>
<div class="r" style="left:0px;top:208px;width:1898px;height:18px;background:#ffffff;"></div>
<div class="r" style="left:852px;top:207px;width:122px;height:19px;background:#d3f0e0;"></div>
<div class="r" style="left:143px;top:208px;width:1px;height:18px;background:#d4d4d4;"></div>
<div class="r" style="left:218px;top:208px;width:1px;height:18px;background:#d4d4d4;"></div>
<div class="r" style="left:389px;top:208px;width:1px;height:18px;background:#d4d4d4;"></div>
<div class="r" style="left:482px;top:208px;width:1px;height:18px;background:#d4d4d4;"></div>
<div class="r" style="left:589px;top:208px;width:1px;height:18px;background:#d4d4d4;"></div>
<div class="r" style="left:653px;top:208px;width:1px;height:18px;background:#d4d4d4;"></div>
<div class="r" style="left:760px;top:208px;width:1px;height:18px;background:#d4d4d4;"></div>
<div class="r" style="left:824px;top:208px;width:1px;height:18px;background:#d4d4d4;"></div>
<div class="r" style="left:851px;top:208px;width:1px;height:18px;background:#d4d4d4;"></div>
<div class="r" style="left:973px;top:208px;width:1px;height:18px;background:#d4d4d4;"></div>
<div class="r" style="left:1048px;top:208px;width:1px;height:18px;background:#d4d4d4;"></div>
<div class="r" style="left:1101px;top:208px;width:1px;height:18px;background:#d4d4d4;"></div>
<div class="r" style="left:1154px;top:208px;width:1px;height:18px;background:#d4d4d4;"></div>
<div class="r" style="left:1456px;top:208px;width:1px;height:18px;background:#d4d4d4;"></div>
<div class="r" style="left:1563px;top:208px;width:1px;height:18px;background:#d4d4d4;"></div>
<div class="r" style="left:1627px;top:208px;width:1px;height:18px;background:#d4d4d4;"></div>
<div class="r" style="left:1691px;top:208px;width:1px;height:18px;background:#d4d4d4;"></div>
<div class="r" style="left:1755px;top:208px;width:1px;height:18px;background:#d4d4d4;"></div>
<div class="r" style="left:1819px;top:208px;width:1px;height:18px;background:#d4d4d4;"></div>
<div class="r" style="left:1883px;top:208px;width:1px;height:18px;background:#d4d4d4;"></div>
<div class="r" style="left:323px;top:208px;width:1px;height:18px;background:#d4d4d4;"></div>
<div class="r" style="left:327px;top:208px;width:1px;height:18px;background:#d4d4d4;"></div>
<div class="r" style="left:25px;top:208px;width:1px;height:18px;background:#d4d4d4;"></div>
<div class="r" style="left:0px;top:226px;width:1898px;height:1px;background:#ababab;"></div>
<svg class="s" style="left:10px;top:211px;" width="13" height="12" viewBox="0 0 13 12"><polygon points="11.5,1 11.5,11 1.5,11" fill="#d6d6d6"/></svg>
<div class="t" style="left:-415.0px;width:1000px;text-align:center;top:211.00px;font-size:12.5px;line-height:12.5px;color:#444444;transform-origin:50% 0;"><span>F</span></div>
<div class="t" style="left:-318.5px;width:1000px;text-align:center;top:211.00px;font-size:12.5px;line-height:12.5px;color:#444444;transform-origin:50% 0;"><span>G</span></div>
<div class="t" style="left:-227.5px;width:1000px;text-align:center;top:211.00px;font-size:12.5px;line-height:12.5px;color:#444444;transform-origin:50% 0;"><span>H</span></div>
<div class="t" style="left:-142.0px;width:1000px;text-align:center;top:211.00px;font-size:12.5px;line-height:12.5px;color:#444444;transform-origin:50% 0;"><span>S</span></div>
<div class="t" style="left:-63.5px;width:1000px;text-align:center;top:211.00px;font-size:12.5px;line-height:12.5px;color:#444444;transform-origin:50% 0;"><span>T</span></div>
<div class="t" style="left:36.5px;width:1000px;text-align:center;top:211.00px;font-size:12.5px;line-height:12.5px;color:#444444;transform-origin:50% 0;"><span>U</span></div>
<div class="t" style="left:122.0px;width:1000px;text-align:center;top:211.00px;font-size:12.5px;line-height:12.5px;color:#444444;transform-origin:50% 0;"><span>V</span></div>
<div class="t" style="left:207.5px;width:1000px;text-align:center;top:211.00px;font-size:12.5px;line-height:12.5px;color:#444444;transform-origin:50% 0;"><span>W</span></div>
<div class="t" style="left:293.0px;width:1000px;text-align:center;top:211.00px;font-size:12.5px;line-height:12.5px;color:#444444;transform-origin:50% 0;"><span>X</span></div>
<div class="t" style="left:338.5px;width:1000px;text-align:center;top:211.00px;font-size:12.5px;line-height:12.5px;color:#444444;transform-origin:50% 0;"><span>Y</span></div>
<div class="t" style="left:413.0px;width:1000px;text-align:center;top:211.00px;font-size:12.5px;line-height:12.5px;color:#1d6b40;transform-origin:50% 0;"><span>Z</span></div>
<div class="t" style="left:511.5px;width:1000px;text-align:center;top:211.00px;font-size:12.5px;line-height:12.5px;color:#444444;transform-origin:50% 0;"><span>AA</span></div>
<div class="t" style="left:575.5px;width:1000px;text-align:center;top:211.00px;font-size:12.5px;line-height:12.5px;color:#444444;transform-origin:50% 0;"><span>AB</span></div>
<div class="t" style="left:628.5px;width:1000px;text-align:center;top:211.00px;font-size:12.5px;line-height:12.5px;color:#444444;transform-origin:50% 0;"><span>AC</span></div>
<div class="t" style="left:806.0px;width:1000px;text-align:center;top:211.00px;font-size:12.5px;line-height:12.5px;color:#444444;transform-origin:50% 0;"><span>AD</span></div>
<div class="t" style="left:1010.5px;width:1000px;text-align:center;top:211.00px;font-size:12.5px;line-height:12.5px;color:#444444;transform-origin:50% 0;"><span>AE</span></div>
<div class="t" style="left:1096.0px;width:1000px;text-align:center;top:211.00px;font-size:12.5px;line-height:12.5px;color:#444444;transform-origin:50% 0;"><span>AF</span></div>
<div class="t" style="left:1160.0px;width:1000px;text-align:center;top:211.00px;font-size:12.5px;line-height:12.5px;color:#444444;transform-origin:50% 0;"><span>AG</span></div>
<div class="t" style="left:1224.0px;width:1000px;text-align:center;top:211.00px;font-size:12.5px;line-height:12.5px;color:#444444;transform-origin:50% 0;"><span>AH</span></div>
<div class="t" style="left:1288.0px;width:1000px;text-align:center;top:211.00px;font-size:12.5px;line-height:12.5px;color:#444444;transform-origin:50% 0;"><span>AI</span></div>
<div class="t" style="left:1352.0px;width:1000px;text-align:center;top:211.00px;font-size:12.5px;line-height:12.5px;color:#444444;transform-origin:50% 0;"><span>AJ</span></div>
<div class="r" style="left:0px;top:227px;width:24px;height:755px;background:#e1e1e1;"></div>
<div class="r" style="left:0px;top:266px;width:24px;height:1px;background:#c6c6c6;"></div>
<div class="t" style="left:-487.5px;width:1000px;text-align:center;top:252.00px;font-size:12.5px;line-height:12.5px;color:#2f4a3a;transform-origin:50% 0;"><span>4</span></div>
<div class="r" style="left:0px;top:286px;width:24px;height:1px;background:#c6c6c6;"></div>
<div class="t" style="left:-487.5px;width:1000px;text-align:center;top:272.00px;font-size:12.5px;line-height:12.5px;color:#2f4a3a;transform-origin:50% 0;"><span>5</span></div>
<div class="r" style="left:0px;top:306px;width:24px;height:1px;background:#c6c6c6;"></div>
<div class="t" style="left:-487.5px;width:1000px;text-align:center;top:292.00px;font-size:12.5px;line-height:12.5px;color:#2f4a3a;transform-origin:50% 0;"><span>6</span></div>
<div class="r" style="left:0px;top:326px;width:24px;height:1px;background:#c6c6c6;"></div>
<div class="t" style="left:-487.5px;width:1000px;text-align:center;top:312.00px;font-size:12.5px;line-height:12.5px;color:#2f4a3a;transform-origin:50% 0;"><span>7</span></div>
<div class="r" style="left:0px;top:346px;width:24px;height:1px;background:#c6c6c6;"></div>
<div class="t" style="left:-487.5px;width:1000px;text-align:center;top:332.00px;font-size:12.5px;line-height:12.5px;color:#2f4a3a;transform-origin:50% 0;"><span>8</span></div>
<div class="r" style="left:0px;top:366px;width:24px;height:1px;background:#c6c6c6;"></div>
<div class="t" style="left:-487.5px;width:1000px;text-align:center;top:352.00px;font-size:12.5px;line-height:12.5px;color:#2f4a3a;transform-origin:50% 0;"><span>9</span></div>
<div class="r" style="left:0px;top:386px;width:24px;height:1px;background:#c6c6c6;"></div>
<div class="t" style="left:-487.5px;width:1000px;text-align:center;top:372.00px;font-size:12.5px;line-height:12.5px;color:#2f4a3a;transform-origin:50% 0;"><span>10</span></div>
<div class="r" style="left:0px;top:406px;width:24px;height:1px;background:#c6c6c6;"></div>
<div class="t" style="left:-487.5px;width:1000px;text-align:center;top:392.00px;font-size:12.5px;line-height:12.5px;color:#2f4a3a;transform-origin:50% 0;"><span>11</span></div>
<div class="r" style="left:0px;top:426px;width:24px;height:1px;background:#c6c6c6;"></div>
<div class="t" style="left:-487.5px;width:1000px;text-align:center;top:412.00px;font-size:12.5px;line-height:12.5px;color:#2f4a3a;transform-origin:50% 0;"><span>12</span></div>
<div class="r" style="left:0px;top:446px;width:24px;height:1px;background:#c6c6c6;"></div>
<div class="t" style="left:-487.5px;width:1000px;text-align:center;top:432.00px;font-size:12.5px;line-height:12.5px;color:#2f4a3a;transform-origin:50% 0;"><span>13</span></div>
<div class="r" style="left:0px;top:466px;width:24px;height:1px;background:#c6c6c6;"></div>
<div class="t" style="left:-487.5px;width:1000px;text-align:center;top:452.00px;font-size:12.5px;line-height:12.5px;color:#2f4a3a;transform-origin:50% 0;"><span>14</span></div>
<div class="r" style="left:0px;top:486px;width:24px;height:1px;background:#c6c6c6;"></div>
<div class="t" style="left:-487.5px;width:1000px;text-align:center;top:472.00px;font-size:12.5px;line-height:12.5px;color:#2f4a3a;transform-origin:50% 0;"><span>15</span></div>
<div class="r" style="left:0px;top:506px;width:24px;height:1px;background:#c6c6c6;"></div>
<div class="t" style="left:-487.5px;width:1000px;text-align:center;top:492.00px;font-size:12.5px;line-height:12.5px;color:#2f4a3a;transform-origin:50% 0;"><span>16</span></div>
<div class="r" style="left:0px;top:526px;width:24px;height:1px;background:#c6c6c6;"></div>
<div class="t" style="left:-487.5px;width:1000px;text-align:center;top:512.00px;font-size:12.5px;line-height:12.5px;color:#2f4a3a;transform-origin:50% 0;"><span>17</span></div>
<div class="r" style="left:0px;top:546px;width:24px;height:1px;background:#c6c6c6;"></div>
<div class="t" style="left:-487.5px;width:1000px;text-align:center;top:532.00px;font-size:12.5px;line-height:12.5px;color:#2f4a3a;transform-origin:50% 0;"><span>18</span></div>
<div class="r" style="left:0px;top:566px;width:24px;height:1px;background:#c6c6c6;"></div>
<div class="t" style="left:-487.5px;width:1000px;text-align:center;top:552.00px;font-size:12.5px;line-height:12.5px;color:#2f4a3a;transform-origin:50% 0;"><span>19</span></div>
<div class="r" style="left:0px;top:586px;width:24px;height:1px;background:#c6c6c6;"></div>
<div class="t" style="left:-487.5px;width:1000px;text-align:center;top:572.00px;font-size:12.5px;line-height:12.5px;color:#2f4a3a;transform-origin:50% 0;"><span>20</span></div>
<div class="r" style="left:0px;top:606px;width:24px;height:1px;background:#c6c6c6;"></div>
<div class="t" style="left:-487.5px;width:1000px;text-align:center;top:592.00px;font-size:12.5px;line-height:12.5px;color:#2f4a3a;transform-origin:50% 0;"><span>21</span></div>
<div class="r" style="left:0px;top:626px;width:24px;height:1px;background:#c6c6c6;"></div>
<div class="t" style="left:-487.5px;width:1000px;text-align:center;top:612.00px;font-size:12.5px;line-height:12.5px;color:#2f4a3a;transform-origin:50% 0;"><span>22</span></div>
<div class="r" style="left:0px;top:646px;width:24px;height:1px;background:#c6c6c6;"></div>
<div class="t" style="left:-487.5px;width:1000px;text-align:center;top:632.00px;font-size:12.5px;line-height:12.5px;color:#2f4a3a;transform-origin:50% 0;"><span>23</span></div>
<div class="r" style="left:0px;top:666px;width:24px;height:1px;background:#c6c6c6;"></div>
<div class="t" style="left:-487.5px;width:1000px;text-align:center;top:652.00px;font-size:12.5px;line-height:12.5px;color:#2f4a3a;transform-origin:50% 0;"><span>24</span></div>
<div class="r" style="left:0px;top:686px;width:24px;height:1px;background:#c6c6c6;"></div>
<div class="t" style="left:-487.5px;width:1000px;text-align:center;top:672.00px;font-size:12.5px;line-height:12.5px;color:#2f4a3a;transform-origin:50% 0;"><span>25</span></div>
<div class="r" style="left:0px;top:706px;width:24px;height:1px;background:#c6c6c6;"></div>
<div class="t" style="left:-487.5px;width:1000px;text-align:center;top:692.00px;font-size:12.5px;line-height:12.5px;color:#2f4a3a;transform-origin:50% 0;"><span>26</span></div>
<div class="r" style="left:0px;top:726px;width:24px;height:1px;background:#c6c6c6;"></div>
<div class="t" style="left:-487.5px;width:1000px;text-align:center;top:712.00px;font-size:12.5px;line-height:12.5px;color:#2f4a3a;transform-origin:50% 0;"><span>27</span></div>
<div class="r" style="left:0px;top:746px;width:24px;height:1px;background:#c6c6c6;"></div>
<div class="t" style="left:-487.5px;width:1000px;text-align:center;top:732.00px;font-size:12.5px;line-height:12.5px;color:#2f4a3a;transform-origin:50% 0;"><span>28</span></div>
<div class="r" style="left:0px;top:766px;width:24px;height:1px;background:#c6c6c6;"></div>
<div class="t" style="left:-487.5px;width:1000px;text-align:center;top:752.00px;font-size:12.5px;line-height:12.5px;color:#2f4a3a;transform-origin:50% 0;"><span>29</span></div>
<div class="r" style="left:0px;top:786px;width:24px;height:1px;background:#c6c6c6;"></div>
<div class="t" style="left:-487.5px;width:1000px;text-align:center;top:772.00px;font-size:12.5px;line-height:12.5px;color:#2f4a3a;transform-origin:50% 0;"><span>30</span></div>
<div class="r" style="left:0px;top:806px;width:24px;height:1px;background:#c6c6c6;"></div>
<div class="t" style="left:-487.5px;width:1000px;text-align:center;top:792.00px;font-size:12.5px;line-height:12.5px;color:#2f4a3a;transform-origin:50% 0;"><span>31</span></div>
<div class="r" style="left:0px;top:826px;width:24px;height:1px;background:#c6c6c6;"></div>
<div class="t" style="left:-487.5px;width:1000px;text-align:center;top:812.00px;font-size:12.5px;line-height:12.5px;color:#2f4a3a;transform-origin:50% 0;"><span>32</span></div>
<div class="r" style="left:0px;top:846px;width:24px;height:1px;background:#c6c6c6;"></div>
<div class="t" style="left:-487.5px;width:1000px;text-align:center;top:832.00px;font-size:12.5px;line-height:12.5px;color:#2f4a3a;transform-origin:50% 0;"><span>33</span></div>
<div class="r" style="left:0px;top:866px;width:24px;height:1px;background:#c6c6c6;"></div>
<div class="t" style="left:-487.5px;width:1000px;text-align:center;top:852.00px;font-size:12.5px;line-height:12.5px;color:#2f4a3a;transform-origin:50% 0;"><span>34</span></div>
<div class="r" style="left:0px;top:886px;width:24px;height:1px;background:#c6c6c6;"></div>
<div class="t" style="left:-487.5px;width:1000px;text-align:center;top:872.00px;font-size:12.5px;line-height:12.5px;color:#2f4a3a;transform-origin:50% 0;"><span>35</span></div>
<div class="r" style="left:0px;top:906px;width:24px;height:1px;background:#c6c6c6;"></div>
<div class="t" style="left:-487.5px;width:1000px;text-align:center;top:892.00px;font-size:12.5px;line-height:12.5px;color:#2f4a3a;transform-origin:50% 0;"><span>36</span></div>
<div class="r" style="left:0px;top:926px;width:24px;height:1px;background:#c6c6c6;"></div>
<div class="t" style="left:-487.5px;width:1000px;text-align:center;top:912.00px;font-size:12.5px;line-height:12.5px;color:#2f4a3a;transform-origin:50% 0;"><span>37</span></div>
<div class="r" style="left:0px;top:946px;width:24px;height:1px;background:#c6c6c6;"></div>
<div class="t" style="left:-487.5px;width:1000px;text-align:center;top:932.00px;font-size:12.5px;line-height:12.5px;color:#2f4a3a;transform-origin:50% 0;"><span>38</span></div>
<div class="r" style="left:0px;top:966px;width:24px;height:1px;background:#c6c6c6;"></div>
<div class="t" style="left:-487.5px;width:1000px;text-align:center;top:952.00px;font-size:12.5px;line-height:12.5px;color:#2f4a3a;transform-origin:50% 0;"><span>39</span></div>
<div class="t" style="left:-487.5px;width:1000px;text-align:center;top:972.00px;font-size:12.5px;line-height:12.5px;color:#2f4a3a;transform-origin:50% 0;"><span>40</span></div>
<div class="r" style="left:24px;top:227px;width:2px;height:755px;background:#1e7145;"></div>
<div class="r" style="left:26px;top:266px;width:1872px;height:1px;background:#d9d9d9;"></div>
<div class="r" style="left:26px;top:286px;width:1872px;height:1px;background:#d9d9d9;"></div>
<div class="r" style="left:26px;top:306px;width:1872px;height:1px;background:#d9d9d9;"></div>
<div class="r" style="left:26px;top:326px;width:1872px;height:1px;background:#d9d9d9;"></div>
<div class="r" style="left:26px;top:346px;width:1872px;height:1px;background:#d9d9d9;"></div>
<div class="r" style="left:26px;top:366px;width:1872px;height:1px;background:#d9d9d9;"></div>
<div class="r" style="left:26px;top:386px;width:1872px;height:1px;background:#d9d9d9;"></div>
<div class="r" style="left:26px;top:406px;width:1872px;height:1px;background:#d9d9d9;"></div>
<div class="r" style="left:26px;top:426px;width:1872px;height:1px;background:#d9d9d9;"></div>
<div class="r" style="left:26px;top:446px;width:1872px;height:1px;background:#d9d9d9;"></div>
<div class="r" style="left:26px;top:466px;width:1872px;height:1px;background:#d9d9d9;"></div>
<div class="r" style="left:26px;top:486px;width:1872px;height:1px;background:#d9d9d9;"></div>
<div class="r" style="left:26px;top:506px;width:1872px;height:1px;background:#d9d9d9;"></div>
<div class="r" style="left:26px;top:526px;width:1872px;height:1px;background:#d9d9d9;"></div>
<div class="r" style="left:26px;top:546px;width:1872px;height:1px;background:#d9d9d9;"></div>
<div class="r" style="left:26px;top:566px;width:1872px;height:1px;background:#d9d9d9;"></div>
<div class="r" style="left:26px;top:586px;width:1872px;height:1px;background:#d9d9d9;"></div>
<div class="r" style="left:26px;top:606px;width:1872px;height:1px;background:#d9d9d9;"></div>
<div class="r" style="left:26px;top:626px;width:1872px;height:1px;background:#d9d9d9;"></div>
<div class="r" style="left:26px;top:646px;width:1872px;height:1px;background:#d9d9d9;"></div>
<div class="r" style="left:26px;top:666px;width:1872px;height:1px;background:#d9d9d9;"></div>
<div class="r" style="left:26px;top:686px;width:1872px;height:1px;background:#d9d9d9;"></div>
<div class="r" style="left:26px;top:706px;width:1872px;height:1px;background:#d9d9d9;"></div>
<div class="r" style="left:26px;top:726px;width:1872px;height:1px;background:#d9d9d9;"></div>
<div class="r" style="left:26px;top:746px;width:1872px;height:1px;background:#d9d9d9;"></div>
<div class="r" style="left:26px;top:766px;width:1872px;height:1px;background:#d9d9d9;"></div>
<div class="r" style="left:26px;top:786px;width:1872px;height:1px;background:#d9d9d9;"></div>
<div class="r" style="left:26px;top:806px;width:1872px;height:1px;background:#d9d9d9;"></div>
<div class="r" style="left:26px;top:826px;width:1872px;height:1px;background:#d9d9d9;"></div>
<div class="r" style="left:26px;top:846px;width:1872px;height:1px;background:#d9d9d9;"></div>
<div class="r" style="left:26px;top:866px;width:1872px;height:1px;background:#d9d9d9;"></div>
<div class="r" style="left:26px;top:886px;width:1872px;height:1px;background:#d9d9d9;"></div>
<div class="r" style="left:26px;top:906px;width:1872px;height:1px;background:#d9d9d9;"></div>
<div class="r" style="left:26px;top:926px;width:1872px;height:1px;background:#d9d9d9;"></div>
<div class="r" style="left:26px;top:946px;width:1872px;height:1px;background:#d9d9d9;"></div>
<div class="r" style="left:26px;top:966px;width:1872px;height:1px;background:#d9d9d9;"></div>
<div class="r" style="left:143px;top:227px;width:1px;height:755px;background:#d9d9d9;"></div>
<div class="r" style="left:218px;top:227px;width:1px;height:755px;background:#d9d9d9;"></div>
<div class="r" style="left:325px;top:227px;width:1px;height:755px;background:#d9d9d9;"></div>
<div class="r" style="left:389px;top:227px;width:1px;height:755px;background:#d9d9d9;"></div>
<div class="r" style="left:482px;top:227px;width:1px;height:755px;background:#d9d9d9;"></div>
<div class="r" style="left:589px;top:227px;width:1px;height:755px;background:#d9d9d9;"></div>
<div class="r" style="left:653px;top:227px;width:1px;height:755px;background:#d9d9d9;"></div>
<div class="r" style="left:760px;top:227px;width:1px;height:755px;background:#d9d9d9;"></div>
<div class="r" style="left:824px;top:227px;width:1px;height:755px;background:#d9d9d9;"></div>
<div class="r" style="left:851px;top:227px;width:1px;height:755px;background:#d9d9d9;"></div>
<div class="r" style="left:973px;top:227px;width:1px;height:755px;background:#d9d9d9;"></div>
<div class="r" style="left:1048px;top:227px;width:1px;height:755px;background:#d9d9d9;"></div>
<div class="r" style="left:1101px;top:227px;width:1px;height:755px;background:#d9d9d9;"></div>
<div class="r" style="left:1154px;top:227px;width:1px;height:755px;background:#d9d9d9;"></div>
<div class="r" style="left:1456px;top:227px;width:1px;height:755px;background:#d9d9d9;"></div>
<div class="r" style="left:1563px;top:227px;width:1px;height:755px;background:#d9d9d9;"></div>
<div class="r" style="left:1627px;top:227px;width:1px;height:755px;background:#d9d9d9;"></div>
<div class="r" style="left:1691px;top:227px;width:1px;height:755px;background:#d9d9d9;"></div>
<div class="r" style="left:1755px;top:227px;width:1px;height:755px;background:#d9d9d9;"></div>
<div class="r" style="left:1819px;top:227px;width:1px;height:755px;background:#d9d9d9;"></div>
<div class="r" style="left:1883px;top:227px;width:1px;height:755px;background:#d9d9d9;"></div>
<div class="r" style="left:1898px;top:227px;width:1px;height:755px;background:#c6c6c6;"></div>
<div class="r" style="left:26px;top:227px;width:117px;height:39px;background:#ddebf7;"></div>
<div class="r" style="left:144px;top:227px;width:74px;height:39px;background:#ddebf7;"></div>
<div class="r" style="left:219px;top:227px;width:106px;height:39px;background:#ddebf7;"></div>
<div class="r" style="left:26px;top:267px;width:117px;height:19px;background:#92d050;"></div>
<div class="r" style="left:144px;top:267px;width:74px;height:19px;background:#92d050;"></div>
<div class="r" style="left:219px;top:267px;width:106px;height:19px;background:#92d050;"></div>
<div class="r" style="left:26px;top:287px;width:117px;height:19px;background:#92d050;"></div>
<div class="r" style="left:144px;top:287px;width:74px;height:19px;background:#92d050;"></div>
<div class="r" style="left:219px;top:287px;width:106px;height:19px;background:#92d050;"></div>
<div class="r" style="left:26px;top:307px;width:117px;height:19px;background:#92d050;"></div>
<div class="r" style="left:144px;top:307px;width:74px;height:19px;background:#92d050;"></div>
<div class="r" style="left:219px;top:307px;width:106px;height:19px;background:#92d050;"></div>
<div class="r" style="left:26px;top:327px;width:117px;height:19px;background:#92d050;"></div>
<div class="r" style="left:144px;top:327px;width:74px;height:19px;background:#92d050;"></div>
<div class="r" style="left:219px;top:327px;width:106px;height:19px;background:#92d050;"></div>
<div class="r" style="left:26px;top:347px;width:117px;height:19px;background:#92d050;"></div>
<div class="r" style="left:144px;top:347px;width:74px;height:19px;background:#92d050;"></div>
<div class="r" style="left:219px;top:347px;width:106px;height:19px;background:#92d050;"></div>
<div class="r" style="left:26px;top:367px;width:117px;height:19px;background:#92d050;"></div>
<div class="r" style="left:144px;top:367px;width:74px;height:19px;background:#92d050;"></div>
<div class="r" style="left:219px;top:367px;width:106px;height:19px;background:#92d050;"></div>
<div class="r" style="left:26px;top:387px;width:117px;height:19px;background:#92d050;"></div>
<div class="r" style="left:144px;top:387px;width:74px;height:19px;background:#92d050;"></div>
<div class="r" style="left:219px;top:387px;width:106px;height:19px;background:#92d050;"></div>
<div class="r" style="left:26px;top:407px;width:117px;height:19px;background:#92d050;"></div>
<div class="r" style="left:144px;top:407px;width:74px;height:19px;background:#92d050;"></div>
<div class="r" style="left:219px;top:407px;width:106px;height:19px;background:#92d050;"></div>
<div class="r" style="left:26px;top:427px;width:117px;height:19px;background:#92d050;"></div>
<div class="r" style="left:144px;top:427px;width:74px;height:19px;background:#92d050;"></div>
<div class="r" style="left:219px;top:427px;width:106px;height:19px;background:#00b0f0;"></div>
<div class="r" style="left:26px;top:447px;width:117px;height:19px;background:#92d050;"></div>
<div class="r" style="left:144px;top:447px;width:74px;height:19px;background:#92d050;"></div>
<div class="r" style="left:219px;top:447px;width:106px;height:19px;background:#00b050;"></div>
<div class="r" style="left:26px;top:467px;width:117px;height:19px;background:#92d050;"></div>
<div class="r" style="left:144px;top:467px;width:74px;height:19px;background:#92d050;"></div>
<div class="r" style="left:219px;top:467px;width:106px;height:19px;background:#00b0f0;"></div>
<div class="r" style="left:26px;top:487px;width:117px;height:19px;background:#92d050;"></div>
<div class="r" style="left:144px;top:487px;width:74px;height:19px;background:#92d050;"></div>
<div class="r" style="left:219px;top:487px;width:106px;height:19px;background:#92d050;"></div>
<div class="r" style="left:26px;top:507px;width:117px;height:19px;background:#92d050;"></div>
<div class="r" style="left:144px;top:507px;width:74px;height:19px;background:#92d050;"></div>
<div class="r" style="left:219px;top:507px;width:106px;height:19px;background:#00b050;"></div>
<div class="r" style="left:26px;top:527px;width:117px;height:19px;background:#92d050;"></div>
<div class="r" style="left:144px;top:527px;width:74px;height:19px;background:#92d050;"></div>
<div class="r" style="left:219px;top:527px;width:106px;height:19px;background:#92d050;"></div>
<div class="r" style="left:26px;top:547px;width:117px;height:19px;background:#92d050;"></div>
<div class="r" style="left:144px;top:547px;width:74px;height:19px;background:#92d050;"></div>
<div class="r" style="left:219px;top:547px;width:106px;height:19px;background:#92d050;"></div>
<div class="r" style="left:26px;top:567px;width:117px;height:19px;background:#92d050;"></div>
<div class="r" style="left:144px;top:567px;width:74px;height:19px;background:#92d050;"></div>
<div class="r" style="left:219px;top:567px;width:106px;height:19px;background:#92d050;"></div>
<div class="r" style="left:26px;top:627px;width:117px;height:19px;background:#ddebf7;"></div>
<div class="r" style="left:144px;top:627px;width:74px;height:19px;background:#ddebf7;"></div>
<div class="r" style="left:854px;top:267px;width:118px;height:715px;background:#c6c6c6;"></div>
<div class="r" style="left:854px;top:286px;width:118px;height:1px;background:#b4b4b4;"></div>
<div class="r" style="left:854px;top:306px;width:118px;height:1px;background:#b4b4b4;"></div>
<div class="r" style="left:854px;top:326px;width:118px;height:1px;background:#b4b4b4;"></div>
<div class="r" style="left:854px;top:346px;width:118px;height:1px;background:#b4b4b4;"></div>
<div class="r" style="left:854px;top:366px;width:118px;height:1px;background:#b4b4b4;"></div>
<div class="r" style="left:854px;top:386px;width:118px;height:1px;background:#b4b4b4;"></div>
<div class="r" style="left:854px;top:406px;width:118px;height:1px;background:#b4b4b4;"></div>
<div class="r" style="left:854px;top:426px;width:118px;height:1px;background:#b4b4b4;"></div>
<div class="r" style="left:854px;top:446px;width:118px;height:1px;background:#b4b4b4;"></div>
<div class="r" style="left:854px;top:466px;width:118px;height:1px;background:#b4b4b4;"></div>
<div class="r" style="left:854px;top:486px;width:118px;height:1px;background:#b4b4b4;"></div>
<div class="r" style="left:854px;top:506px;width:118px;height:1px;background:#b4b4b4;"></div>
<div class="r" style="left:854px;top:526px;width:118px;height:1px;background:#b4b4b4;"></div>
<div class="r" style="left:854px;top:546px;width:118px;height:1px;background:#b4b4b4;"></div>
<div class="r" style="left:854px;top:566px;width:118px;height:1px;background:#b4b4b4;"></div>
<div class="r" style="left:854px;top:586px;width:118px;height:1px;background:#b4b4b4;"></div>
<div class="r" style="left:854px;top:606px;width:118px;height:1px;background:#b4b4b4;"></div>
<div class="r" style="left:854px;top:626px;width:118px;height:1px;background:#b4b4b4;"></div>
<div class="r" style="left:854px;top:646px;width:118px;height:1px;background:#b4b4b4;"></div>
<div class="r" style="left:854px;top:666px;width:118px;height:1px;background:#b4b4b4;"></div>
<div class="r" style="left:854px;top:686px;width:118px;height:1px;background:#b4b4b4;"></div>
<div class="r" style="left:854px;top:706px;width:118px;height:1px;background:#b4b4b4;"></div>
<div class="r" style="left:854px;top:726px;width:118px;height:1px;background:#b4b4b4;"></div>
<div class="r" style="left:854px;top:746px;width:118px;height:1px;background:#b4b4b4;"></div>
<div class="r" style="left:854px;top:766px;width:118px;height:1px;background:#b4b4b4;"></div>
<div class="r" style="left:854px;top:786px;width:118px;height:1px;background:#b4b4b4;"></div>
<div class="r" style="left:854px;top:806px;width:118px;height:1px;background:#b4b4b4;"></div>
<div class="r" style="left:854px;top:826px;width:118px;height:1px;background:#b4b4b4;"></div>
<div class="r" style="left:854px;top:846px;width:118px;height:1px;background:#b4b4b4;"></div>
<div class="r" style="left:854px;top:866px;width:118px;height:1px;background:#b4b4b4;"></div>
<div class="r" style="left:854px;top:886px;width:118px;height:1px;background:#b4b4b4;"></div>
<div class="r" style="left:854px;top:906px;width:118px;height:1px;background:#b4b4b4;"></div>
<div class="r" style="left:854px;top:926px;width:118px;height:1px;background:#b4b4b4;"></div>
<div class="r" style="left:854px;top:946px;width:118px;height:1px;background:#b4b4b4;"></div>
<div class="r" style="left:854px;top:966px;width:118px;height:1px;background:#b4b4b4;"></div>
<div class="r" style="left:143px;top:227px;width:1px;height:420px;background:#000;"></div>
<div class="r" style="left:218px;top:227px;width:1px;height:420px;background:#000;"></div>
<div class="r" style="left:325px;top:227px;width:1px;height:420px;background:#000;"></div>
<div class="r" style="left:389px;top:227px;width:1px;height:420px;background:#000;"></div>
<div class="r" style="left:482px;top:227px;width:1px;height:420px;background:#000;"></div>
<div class="r" style="left:589px;top:227px;width:1px;height:420px;background:#000;"></div>
<div class="r" style="left:25px;top:266px;width:565px;height:1px;background:#000;"></div>
<div class="r" style="left:25px;top:286px;width:565px;height:1px;background:#000;"></div>
<div class="r" style="left:25px;top:306px;width:565px;height:1px;background:#000;"></div>
<div class="r" style="left:25px;top:326px;width:565px;height:1px;background:#000;"></div>
<div class="r" style="left:25px;top:346px;width:565px;height:1px;background:#000;"></div>
<div class="r" style="left:25px;top:366px;width:565px;height:1px;background:#000;"></div>
<div class="r" style="left:25px;top:386px;width:565px;height:1px;background:#000;"></div>
<div class="r" style="left:25px;top:406px;width:565px;height:1px;background:#000;"></div>
<div class="r" style="left:25px;top:426px;width:565px;height:1px;background:#000;"></div>
<div class="r" style="left:25px;top:446px;width:565px;height:1px;background:#000;"></div>
<div class="r" style="left:25px;top:466px;width:565px;height:1px;background:#000;"></div>
<div class="r" style="left:25px;top:486px;width:565px;height:1px;background:#000;"></div>
<div class="r" style="left:25px;top:506px;width:565px;height:1px;background:#000;"></div>
<div class="r" style="left:25px;top:526px;width:565px;height:1px;background:#000;"></div>
<div class="r" style="left:25px;top:546px;width:565px;height:1px;background:#000;"></div>
<div class="r" style="left:25px;top:566px;width:565px;height:1px;background:#000;"></div>
<div class="r" style="left:25px;top:586px;width:565px;height:1px;background:#000;"></div>
<div class="r" style="left:25px;top:606px;width:565px;height:1px;background:#000;"></div>
<div class="r" style="left:25px;top:626px;width:565px;height:1px;background:#000;"></div>
<div class="r" style="left:25px;top:646px;width:565px;height:1px;background:#000;"></div>
<svg class="s" style="left:320px;top:427px;" width="5" height="5" viewBox="0 0 5 5"><polygon points="0,0 5,0 5,5" fill="#e00000"/></svg>
<svg class="s" style="left:320px;top:447px;" width="5" height="5" viewBox="0 0 5 5"><polygon points="0,0 5,0 5,5" fill="#e00000"/></svg>
<svg class="s" style="left:320px;top:467px;" width="5" height="5" viewBox="0 0 5 5"><polygon points="0,0 5,0 5,5" fill="#e00000"/></svg>
<svg class="s" style="left:320px;top:507px;" width="5" height="5" viewBox="0 0 5 5"><polygon points="0,0 5,0 5,5" fill="#e00000"/></svg>
<div class="t" id="f60" style="left:-415.3px;width:1000px;text-align:center;top:232.00px;font-size:12.5px;line-height:12.5px;color:#000;font-weight:bold;transform:scaleX(1.0354);transform-origin:50% 0;"><span>TAGIHAN</span></div>
<div class="t" id="f61" style="left:-319px;width:1000px;text-align:center;top:232.00px;font-size:12.5px;line-height:12.5px;color:#000;font-weight:bold;transform:scaleX(0.9772);transform-origin:50% 0;"><span>TGL BAYAR</span></div>
<div class="t" id="f62" style="left:-227.5px;width:1000px;text-align:center;top:232.00px;font-size:12.5px;line-height:12.5px;color:#000;font-weight:bold;transform:scaleX(1.0630);transform-origin:50% 0;"><span>NOMINAL</span></div>
<div class="t" id="f63" style="left:-227px;width:1000px;text-align:center;top:251.00px;font-size:12.5px;line-height:12.5px;color:#000;font-weight:bold;transform:scaleX(1.0096);transform-origin:50% 0;"><span>DITERIMA</span></div>
<div class="t" id="f64" style="left:206.70000000000005px;width:1000px;text-align:center;top:242.00px;font-size:12.5px;line-height:12.5px;color:#000;transform:scaleX(0.9137);transform-origin:50% 0;-webkit-text-stroke:0.25px #000;"><span>SELISIH</span></div>
<div class="t" style="left:-864px;width:1000px;text-align:right;top:272.00px;font-size:12.5px;line-height:12.5px;color:#000;letter-spacing:0.13px;transform-origin:100% 0;-webkit-text-stroke:0.25px #000;"><span>250.000.000,00</span></div>
<div class="t" style="left:146.5px;top:272.00px;font-size:12.5px;line-height:12.5px;color:#000;letter-spacing:0.45px;transform-origin:0 0;-webkit-text-stroke:0.25px #000;">24/02/2025</div>
<div class="t" style="left:-682px;width:1000px;text-align:right;top:272.00px;font-size:12.5px;line-height:12.5px;color:#000;letter-spacing:0.13px;transform-origin:100% 0;-webkit-text-stroke:0.25px #000;"><span>245.625.000,00</span></div>
<div class="t" style="left:-614px;width:1000px;text-align:right;top:272.00px;font-size:12.5px;line-height:12.5px;color:#000;letter-spacing:0.13px;transform-origin:100% 0;-webkit-text-stroke:0.25px #000;"><span>1,75%</span></div>
<div class="t" style="left:-525px;width:1000px;text-align:right;top:272.00px;font-size:12.5px;line-height:12.5px;color:#000;letter-spacing:0.13px;transform-origin:100% 0;-webkit-text-stroke:0.25px #000;"><span>4.375.000,00</span></div>
<div class="t" style="left:-418px;width:1000px;text-align:right;top:272.00px;font-size:12.5px;line-height:12.5px;color:#000;letter-spacing:0.13px;transform-origin:100% 0;-webkit-text-stroke:0.25px #000;"><span>245.625.000,00</span></div>
<div class="t" style="left:-247px;width:1000px;text-align:right;top:272.00px;font-size:12.5px;line-height:12.5px;color:#000;letter-spacing:0.13px;transform-origin:100% 0;-webkit-text-stroke:0.25px #000;"><span>245.625.000,00</span></div>
<div class="t" style="left:-864px;width:1000px;text-align:right;top:292.00px;font-size:12.5px;line-height:12.5px;color:#000;letter-spacing:0.13px;transform-origin:100% 0;-webkit-text-stroke:0.25px #000;"><span>200.000.000,00</span></div>
<div class="t" style="left:146.5px;top:292.00px;font-size:12.5px;line-height:12.5px;color:#000;letter-spacing:0.45px;transform-origin:0 0;-webkit-text-stroke:0.25px #000;">27/02/2025</div>
<div class="t" style="left:-682px;width:1000px;text-align:right;top:292.00px;font-size:12.5px;line-height:12.5px;color:#000;letter-spacing:0.13px;transform-origin:100% 0;-webkit-text-stroke:0.25px #000;"><span>196.500.000,00</span></div>
<div class="t" style="left:-614px;width:1000px;text-align:right;top:292.00px;font-size:12.5px;line-height:12.5px;color:#000;letter-spacing:0.13px;transform-origin:100% 0;-webkit-text-stroke:0.25px #000;"><span>1,75%</span></div>
<div class="t" style="left:-525px;width:1000px;text-align:right;top:292.00px;font-size:12.5px;line-height:12.5px;color:#000;letter-spacing:0.13px;transform-origin:100% 0;-webkit-text-stroke:0.25px #000;"><span>3.500.000,00</span></div>
<div class="t" style="left:-418px;width:1000px;text-align:right;top:292.00px;font-size:12.5px;line-height:12.5px;color:#000;letter-spacing:0.13px;transform-origin:100% 0;-webkit-text-stroke:0.25px #000;"><span>196.500.000,00</span></div>
<div class="t" style="left:-247px;width:1000px;text-align:right;top:292.00px;font-size:12.5px;line-height:12.5px;color:#000;letter-spacing:0.13px;transform-origin:100% 0;-webkit-text-stroke:0.25px #000;"><span>196.500.000,00</span></div>
<div class="t" style="left:-864px;width:1000px;text-align:right;top:312.00px;font-size:12.5px;line-height:12.5px;color:#000;letter-spacing:0.13px;transform-origin:100% 0;-webkit-text-stroke:0.25px #000;"><span>300.000.000,00</span></div>
<div class="t" style="left:146.5px;top:312.00px;font-size:12.5px;line-height:12.5px;color:#000;letter-spacing:0.45px;transform-origin:0 0;-webkit-text-stroke:0.25px #000;">12/03/2025</div>
<div class="t" style="left:-682px;width:1000px;text-align:right;top:312.00px;font-size:12.5px;line-height:12.5px;color:#000;letter-spacing:0.13px;transform-origin:100% 0;-webkit-text-stroke:0.25px #000;"><span>294.750.000,00</span></div>
<div class="t" style="left:-614px;width:1000px;text-align:right;top:312.00px;font-size:12.5px;line-height:12.5px;color:#000;letter-spacing:0.13px;transform-origin:100% 0;-webkit-text-stroke:0.25px #000;"><span>1,75%</span></div>
<div class="t" style="left:-525px;width:1000px;text-align:right;top:312.00px;font-size:12.5px;line-height:12.5px;color:#000;letter-spacing:0.13px;transform-origin:100% 0;-webkit-text-stroke:0.25px #000;"><span>5.250.000,00</span></div>
<div class="t" style="left:-418px;width:1000px;text-align:right;top:312.00px;font-size:12.5px;line-height:12.5px;color:#000;letter-spacing:0.13px;transform-origin:100% 0;-webkit-text-stroke:0.25px #000;"><span>294.750.000,00</span></div>
<div class="t" style="left:-247px;width:1000px;text-align:right;top:312.00px;font-size:12.5px;line-height:12.5px;color:#000;letter-spacing:0.13px;transform-origin:100% 0;-webkit-text-stroke:0.25px #000;"><span>294.750.000,00</span></div>
<div class="t" style="left:-864px;width:1000px;text-align:right;top:332.00px;font-size:12.5px;line-height:12.5px;color:#000;letter-spacing:0.13px;transform-origin:100% 0;-webkit-text-stroke:0.25px #000;"><span>100.000.000,00</span></div>
<div class="t" style="left:146.5px;top:332.00px;font-size:12.5px;line-height:12.5px;color:#000;letter-spacing:0.45px;transform-origin:0 0;-webkit-text-stroke:0.25px #000;">23/04/2025</div>
<div class="t" style="left:-682px;width:1000px;text-align:right;top:332.00px;font-size:12.5px;line-height:12.5px;color:#000;letter-spacing:0.13px;transform-origin:100% 0;-webkit-text-stroke:0.25px #000;"><span>98.250.000,00</span></div>
<div class="t" style="left:-614px;width:1000px;text-align:right;top:332.00px;font-size:12.5px;line-height:12.5px;color:#000;letter-spacing:0.13px;transform-origin:100% 0;-webkit-text-stroke:0.25px #000;"><span>1,75%</span></div>
<div class="t" style="left:-525px;width:1000px;text-align:right;top:332.00px;font-size:12.5px;line-height:12.5px;color:#000;letter-spacing:0.13px;transform-origin:100% 0;-webkit-text-stroke:0.25px #000;"><span>1.750.000,00</span></div>
<div class="t" style="left:-418px;width:1000px;text-align:right;top:332.00px;font-size:12.5px;line-height:12.5px;color:#000;letter-spacing:0.13px;transform-origin:100% 0;-webkit-text-stroke:0.25px #000;"><span>98.250.000,00</span></div>
<div class="t" style="left:-247px;width:1000px;text-align:right;top:332.00px;font-size:12.5px;line-height:12.5px;color:#000;letter-spacing:0.13px;transform-origin:100% 0;-webkit-text-stroke:0.25px #000;"><span>98.250.000,00</span></div>
<div class="t" style="left:-864px;width:1000px;text-align:right;top:352.00px;font-size:12.5px;line-height:12.5px;color:#000;letter-spacing:0.13px;transform-origin:100% 0;-webkit-text-stroke:0.25px #000;"><span>150.000.000,00</span></div>
<div class="t" style="left:146.5px;top:352.00px;font-size:12.5px;line-height:12.5px;color:#000;letter-spacing:0.45px;transform-origin:0 0;-webkit-text-stroke:0.25px #000;">05/05/2025</div>
<div class="t" style="left:-682px;width:1000px;text-align:right;top:352.00px;font-size:12.5px;line-height:12.5px;color:#000;letter-spacing:0.13px;transform-origin:100% 0;-webkit-text-stroke:0.25px #000;"><span>147.375.000,00</span></div>
<div class="t" style="left:-614px;width:1000px;text-align:right;top:352.00px;font-size:12.5px;line-height:12.5px;color:#000;letter-spacing:0.13px;transform-origin:100% 0;-webkit-text-stroke:0.25px #000;"><span>1,75%</span></div>
<div class="t" style="left:-525px;width:1000px;text-align:right;top:352.00px;font-size:12.5px;line-height:12.5px;color:#000;letter-spacing:0.13px;transform-origin:100% 0;-webkit-text-stroke:0.25px #000;"><span>2.625.000,00</span></div>
<div class="t" style="left:-418px;width:1000px;text-align:right;top:352.00px;font-size:12.5px;line-height:12.5px;color:#000;letter-spacing:0.13px;transform-origin:100% 0;-webkit-text-stroke:0.25px #000;"><span>147.375.000,00</span></div>
<div class="t" style="left:-247px;width:1000px;text-align:right;top:352.00px;font-size:12.5px;line-height:12.5px;color:#000;letter-spacing:0.13px;transform-origin:100% 0;-webkit-text-stroke:0.25px #000;"><span>147.375.000,00</span></div>
<div class="t" style="left:-864px;width:1000px;text-align:right;top:372.00px;font-size:12.5px;line-height:12.5px;color:#000;letter-spacing:0.13px;transform-origin:100% 0;-webkit-text-stroke:0.25px #000;"><span>200.000.000,00</span></div>
<div class="t" style="left:146.5px;top:372.00px;font-size:12.5px;line-height:12.5px;color:#000;letter-spacing:0.45px;transform-origin:0 0;-webkit-text-stroke:0.25px #000;">13/05/2025</div>
<div class="t" style="left:-682px;width:1000px;text-align:right;top:372.00px;font-size:12.5px;line-height:12.5px;color:#000;letter-spacing:0.13px;transform-origin:100% 0;-webkit-text-stroke:0.25px #000;"><span>196.500.000,00</span></div>
<div class="t" style="left:-614px;width:1000px;text-align:right;top:372.00px;font-size:12.5px;line-height:12.5px;color:#000;letter-spacing:0.13px;transform-origin:100% 0;-webkit-text-stroke:0.25px #000;"><span>1,75%</span></div>
<div class="t" style="left:-525px;width:1000px;text-align:right;top:372.00px;font-size:12.5px;line-height:12.5px;color:#000;letter-spacing:0.13px;transform-origin:100% 0;-webkit-text-stroke:0.25px #000;"><span>3.500.000,00</span></div>
<div class="t" style="left:-418px;width:1000px;text-align:right;top:372.00px;font-size:12.5px;line-height:12.5px;color:#000;letter-spacing:0.13px;transform-origin:100% 0;-webkit-text-stroke:0.25px #000;"><span>196.500.000,00</span></div>
<div class="t" style="left:-247px;width:1000px;text-align:right;top:372.00px;font-size:12.5px;line-height:12.5px;color:#000;letter-spacing:0.13px;transform-origin:100% 0;-webkit-text-stroke:0.25px #000;"><span>196.500.000,00</span></div>
<div class="t" style="left:-864px;width:1000px;text-align:right;top:392.00px;font-size:12.5px;line-height:12.5px;color:#000;letter-spacing:0.13px;transform-origin:100% 0;-webkit-text-stroke:0.25px #000;"><span>100.000.000,00</span></div>
<div class="t" style="left:146.5px;top:392.00px;font-size:12.5px;line-height:12.5px;color:#000;letter-spacing:0.45px;transform-origin:0 0;-webkit-text-stroke:0.25px #000;">20/05/2025</div>
<div class="t" style="left:-682px;width:1000px;text-align:right;top:392.00px;font-size:12.5px;line-height:12.5px;color:#000;letter-spacing:0.13px;transform-origin:100% 0;-webkit-text-stroke:0.25px #000;"><span>98.250.000,00</span></div>
<div class="t" style="left:-614px;width:1000px;text-align:right;top:392.00px;font-size:12.5px;line-height:12.5px;color:#000;letter-spacing:0.13px;transform-origin:100% 0;-webkit-text-stroke:0.25px #000;"><span>1,75%</span></div>
<div class="t" style="left:-525px;width:1000px;text-align:right;top:392.00px;font-size:12.5px;line-height:12.5px;color:#000;letter-spacing:0.13px;transform-origin:100% 0;-webkit-text-stroke:0.25px #000;"><span>1.750.000,00</span></div>
<div class="t" style="left:-418px;width:1000px;text-align:right;top:392.00px;font-size:12.5px;line-height:12.5px;color:#000;letter-spacing:0.13px;transform-origin:100% 0;-webkit-text-stroke:0.25px #000;"><span>98.250.000,00</span></div>
<div class="t" style="left:-247px;width:1000px;text-align:right;top:392.00px;font-size:12.5px;line-height:12.5px;color:#000;letter-spacing:0.13px;transform-origin:100% 0;-webkit-text-stroke:0.25px #000;"><span>98.250.000,00</span></div>
<div class="t" style="left:-864px;width:1000px;text-align:right;top:412.00px;font-size:12.5px;line-height:12.5px;color:#000;letter-spacing:0.13px;transform-origin:100% 0;-webkit-text-stroke:0.25px #000;"><span>300.000.000,00</span></div>
<div class="t" style="left:146.5px;top:412.00px;font-size:12.5px;line-height:12.5px;color:#000;letter-spacing:0.45px;transform-origin:0 0;-webkit-text-stroke:0.25px #000;">27/05/2025</div>
<div class="t" style="left:-682px;width:1000px;text-align:right;top:412.00px;font-size:12.5px;line-height:12.5px;color:#000;letter-spacing:0.13px;transform-origin:100% 0;-webkit-text-stroke:0.25px #000;"><span>294.750.000,00</span></div>
<div class="t" style="left:-614px;width:1000px;text-align:right;top:412.00px;font-size:12.5px;line-height:12.5px;color:#000;letter-spacing:0.13px;transform-origin:100% 0;-webkit-text-stroke:0.25px #000;"><span>1,75%</span></div>
<div class="t" style="left:-525px;width:1000px;text-align:right;top:412.00px;font-size:12.5px;line-height:12.5px;color:#000;letter-spacing:0.13px;transform-origin:100% 0;-webkit-text-stroke:0.25px #000;"><span>5.250.000,00</span></div>
<div class="t" style="left:-418px;width:1000px;text-align:right;top:412.00px;font-size:12.5px;line-height:12.5px;color:#000;letter-spacing:0.13px;transform-origin:100% 0;-webkit-text-stroke:0.25px #000;"><span>294.750.000,00</span></div>
<div class="t" style="left:-247px;width:1000px;text-align:right;top:412.00px;font-size:12.5px;line-height:12.5px;color:#000;letter-spacing:0.13px;transform-origin:100% 0;-webkit-text-stroke:0.25px #000;"><span>294.750.000,00</span></div>
<div class="t" style="left:-864px;width:1000px;text-align:right;top:432.00px;font-size:12.5px;line-height:12.5px;color:#000;letter-spacing:0.13px;transform-origin:100% 0;-webkit-text-stroke:0.25px #000;"><span>253.160.000,00</span></div>
<div class="t" style="left:146.5px;top:432.00px;font-size:12.5px;line-height:12.5px;color:#000;letter-spacing:0.45px;transform-origin:0 0;-webkit-text-stroke:0.25px #000;">16/06/2025</div>
<div class="t" style="left:-682px;width:1000px;text-align:right;top:432.00px;font-size:12.5px;line-height:12.5px;color:#000;letter-spacing:0.13px;transform-origin:100% 0;-webkit-text-stroke:0.25px #000;"><span>248.729.700,00</span></div>
<div class="t" style="left:-614px;width:1000px;text-align:right;top:432.00px;font-size:12.5px;line-height:12.5px;color:#000;letter-spacing:0.13px;transform-origin:100% 0;-webkit-text-stroke:0.25px #000;"><span>1,75%</span></div>
<div class="t" style="left:-525px;width:1000px;text-align:right;top:432.00px;font-size:12.5px;line-height:12.5px;color:#000;letter-spacing:0.13px;transform-origin:100% 0;-webkit-text-stroke:0.25px #000;"><span>4.430.300,00</span></div>
<div class="t" style="left:-418px;width:1000px;text-align:right;top:432.00px;font-size:12.5px;line-height:12.5px;color:#000;letter-spacing:0.13px;transform-origin:100% 0;-webkit-text-stroke:0.25px #000;"><span>248.729.700,00</span></div>
<div class="t" style="left:-247px;width:1000px;text-align:right;top:432.00px;font-size:12.5px;line-height:12.5px;color:#000;letter-spacing:0.13px;transform-origin:100% 0;-webkit-text-stroke:0.25px #000;"><span>248.729.700,00</span></div>
<div class="t" style="left:-864px;width:1000px;text-align:right;top:452.00px;font-size:12.5px;line-height:12.5px;color:#000;letter-spacing:0.13px;transform-origin:100% 0;-webkit-text-stroke:0.25px #000;"><span>276.240.000,00</span></div>
<div class="t" style="left:146.5px;top:452.00px;font-size:12.5px;line-height:12.5px;color:#000;letter-spacing:0.45px;transform-origin:0 0;-webkit-text-stroke:0.25px #000;">25/06/2025</div>
<div class="t" style="left:-682px;width:1000px;text-align:right;top:452.00px;font-size:12.5px;line-height:12.5px;color:#000;letter-spacing:0.13px;transform-origin:100% 0;-webkit-text-stroke:0.25px #000;"><span>271.405.800,00</span></div>
<div class="t" style="left:-614px;width:1000px;text-align:right;top:452.00px;font-size:12.5px;line-height:12.5px;color:#000;letter-spacing:0.13px;transform-origin:100% 0;-webkit-text-stroke:0.25px #000;"><span>1,75%</span></div>
<div class="t" style="left:-525px;width:1000px;text-align:right;top:452.00px;font-size:12.5px;line-height:12.5px;color:#000;letter-spacing:0.13px;transform-origin:100% 0;-webkit-text-stroke:0.25px #000;"><span>4.834.200,00</span></div>
<div class="t" style="left:-418px;width:1000px;text-align:right;top:452.00px;font-size:12.5px;line-height:12.5px;color:#000;letter-spacing:0.13px;transform-origin:100% 0;-webkit-text-stroke:0.25px #000;"><span>271.405.800,00</span></div>
<div class="t" style="left:-247px;width:1000px;text-align:right;top:452.00px;font-size:12.5px;line-height:12.5px;color:#000;letter-spacing:0.13px;transform-origin:100% 0;-webkit-text-stroke:0.25px #000;"><span>271.405.800,00</span></div>
<div class="t" style="left:-864px;width:1000px;text-align:right;top:472.00px;font-size:12.5px;line-height:12.5px;color:#000;letter-spacing:0.13px;transform-origin:100% 0;-webkit-text-stroke:0.25px #000;"><span>239.360.000,00</span></div>
<div class="t" style="left:146.5px;top:472.00px;font-size:12.5px;line-height:12.5px;color:#000;letter-spacing:0.45px;transform-origin:0 0;-webkit-text-stroke:0.25px #000;">16/06/2025</div>
<div class="t" style="left:-682px;width:1000px;text-align:right;top:472.00px;font-size:12.5px;line-height:12.5px;color:#000;letter-spacing:0.13px;transform-origin:100% 0;-webkit-text-stroke:0.25px #000;"><span>235.171.200,00</span></div>
<div class="t" style="left:-614px;width:1000px;text-align:right;top:472.00px;font-size:12.5px;line-height:12.5px;color:#000;letter-spacing:0.13px;transform-origin:100% 0;-webkit-text-stroke:0.25px #000;"><span>1,75%</span></div>
<div class="t" style="left:-525px;width:1000px;text-align:right;top:472.00px;font-size:12.5px;line-height:12.5px;color:#000;letter-spacing:0.13px;transform-origin:100% 0;-webkit-text-stroke:0.25px #000;"><span>4.188.800,00</span></div>
<div class="t" style="left:-418px;width:1000px;text-align:right;top:472.00px;font-size:12.5px;line-height:12.5px;color:#000;letter-spacing:0.13px;transform-origin:100% 0;-webkit-text-stroke:0.25px #000;"><span>235.171.200,00</span></div>
<div class="t" style="left:-247px;width:1000px;text-align:right;top:472.00px;font-size:12.5px;line-height:12.5px;color:#000;letter-spacing:0.13px;transform-origin:100% 0;-webkit-text-stroke:0.25px #000;"><span>235.171.200,00</span></div>
<div class="t" style="left:-864px;width:1000px;text-align:right;top:492.00px;font-size:12.5px;line-height:12.5px;color:#000;letter-spacing:0.13px;transform-origin:100% 0;-webkit-text-stroke:0.25px #000;"><span>150.000.000,00</span></div>
<div class="t" style="left:146.5px;top:492.00px;font-size:12.5px;line-height:12.5px;color:#000;letter-spacing:0.45px;transform-origin:0 0;-webkit-text-stroke:0.25px #000;">16/06/2025</div>
<div class="t" style="left:-682px;width:1000px;text-align:right;top:492.00px;font-size:12.5px;line-height:12.5px;color:#000;letter-spacing:0.13px;transform-origin:100% 0;-webkit-text-stroke:0.25px #000;"><span>147.375.000,00</span></div>
<div class="t" style="left:-614px;width:1000px;text-align:right;top:492.00px;font-size:12.5px;line-height:12.5px;color:#000;letter-spacing:0.13px;transform-origin:100% 0;-webkit-text-stroke:0.25px #000;"><span>1,75%</span></div>
<div class="t" style="left:-525px;width:1000px;text-align:right;top:492.00px;font-size:12.5px;line-height:12.5px;color:#000;letter-spacing:0.13px;transform-origin:100% 0;-webkit-text-stroke:0.25px #000;"><span>2.625.000,00</span></div>
<div class="t" style="left:-418px;width:1000px;text-align:right;top:492.00px;font-size:12.5px;line-height:12.5px;color:#000;letter-spacing:0.13px;transform-origin:100% 0;-webkit-text-stroke:0.25px #000;"><span>147.375.000,00</span></div>
<div class="t" style="left:-247px;width:1000px;text-align:right;top:492.00px;font-size:12.5px;line-height:12.5px;color:#000;letter-spacing:0.13px;transform-origin:100% 0;-webkit-text-stroke:0.25px #000;"><span>147.375.000,00</span></div>
<div class="t" style="left:-864px;width:1000px;text-align:right;top:512.00px;font-size:12.5px;line-height:12.5px;color:#000;letter-spacing:0.13px;transform-origin:100% 0;-webkit-text-stroke:0.25px #000;"><span>247.520.000,00</span></div>
<div class="t" style="left:146.5px;top:512.00px;font-size:12.5px;line-height:12.5px;color:#000;letter-spacing:0.45px;transform-origin:0 0;-webkit-text-stroke:0.25px #000;">25/06/2025</div>
<div class="t" style="left:-682px;width:1000px;text-align:right;top:512.00px;font-size:12.5px;line-height:12.5px;color:#000;letter-spacing:0.13px;transform-origin:100% 0;-webkit-text-stroke:0.25px #000;"><span>243.188.400,00</span></div>
<div class="t" style="left:-614px;width:1000px;text-align:right;top:512.00px;font-size:12.5px;line-height:12.5px;color:#000;letter-spacing:0.13px;transform-origin:100% 0;-webkit-text-stroke:0.25px #000;"><span>1,75%</span></div>
<div class="t" style="left:-525px;width:1000px;text-align:right;top:512.00px;font-size:12.5px;line-height:12.5px;color:#000;letter-spacing:0.13px;transform-origin:100% 0;-webkit-text-stroke:0.25px #000;"><span>4.331.600,00</span></div>
<div class="t" style="left:-418px;width:1000px;text-align:right;top:512.00px;font-size:12.5px;line-height:12.5px;color:#000;letter-spacing:0.13px;transform-origin:100% 0;-webkit-text-stroke:0.25px #000;"><span>243.188.400,00</span></div>
<div class="t" style="left:-247px;width:1000px;text-align:right;top:512.00px;font-size:12.5px;line-height:12.5px;color:#000;letter-spacing:0.13px;transform-origin:100% 0;-webkit-text-stroke:0.25px #000;"><span>243.188.400,00</span></div>
<div class="t" style="left:-864px;width:1000px;text-align:right;top:532.00px;font-size:12.5px;line-height:12.5px;color:#000;letter-spacing:0.13px;transform-origin:100% 0;-webkit-text-stroke:0.25px #000;"><span>150.000.000,00</span></div>
<div class="t" style="left:146.5px;top:532.00px;font-size:12.5px;line-height:12.5px;color:#000;letter-spacing:0.45px;transform-origin:0 0;-webkit-text-stroke:0.25px #000;">26/06/2025</div>
<div class="t" style="left:-682px;width:1000px;text-align:right;top:532.00px;font-size:12.5px;line-height:12.5px;color:#000;letter-spacing:0.13px;transform-origin:100% 0;-webkit-text-stroke:0.25px #000;"><span>147.375.000,00</span></div>
<div class="t" style="left:-614px;width:1000px;text-align:right;top:532.00px;font-size:12.5px;line-height:12.5px;color:#000;letter-spacing:0.13px;transform-origin:100% 0;-webkit-text-stroke:0.25px #000;"><span>1,75%</span></div>
<div class="t" style="left:-525px;width:1000px;text-align:right;top:532.00px;font-size:12.5px;line-height:12.5px;color:#000;letter-spacing:0.13px;transform-origin:100% 0;-webkit-text-stroke:0.25px #000;"><span>2.625.000,00</span></div>
<div class="t" style="left:-418px;width:1000px;text-align:right;top:532.00px;font-size:12.5px;line-height:12.5px;color:#000;letter-spacing:0.13px;transform-origin:100% 0;-webkit-text-stroke:0.25px #000;"><span>147.375.000,00</span></div>
<div class="t" style="left:-247px;width:1000px;text-align:right;top:532.00px;font-size:12.5px;line-height:12.5px;color:#000;letter-spacing:0.13px;transform-origin:100% 0;-webkit-text-stroke:0.25px #000;"><span>147.375.000,00</span></div>
<div class="t" style="left:-864px;width:1000px;text-align:right;top:552.00px;font-size:12.5px;line-height:12.5px;color:#000;letter-spacing:0.13px;transform-origin:100% 0;-webkit-text-stroke:0.25px #000;"><span>250.000.000,00</span></div>
<div class="t" style="left:146.5px;top:552.00px;font-size:12.5px;line-height:12.5px;color:#000;letter-spacing:0.45px;transform-origin:0 0;-webkit-text-stroke:0.25px #000;">24/06/2025</div>
<div class="t" style="left:-682px;width:1000px;text-align:right;top:552.00px;font-size:12.5px;line-height:12.5px;color:#000;letter-spacing:0.13px;transform-origin:100% 0;-webkit-text-stroke:0.25px #000;"><span>245.625.000,00</span></div>
<div class="t" style="left:-614px;width:1000px;text-align:right;top:552.00px;font-size:12.5px;line-height:12.5px;color:#000;letter-spacing:0.13px;transform-origin:100% 0;-webkit-text-stroke:0.25px #000;"><span>1,75%</span></div>
<div class="t" style="left:-525px;width:1000px;text-align:right;top:552.00px;font-size:12.5px;line-height:12.5px;color:#000;letter-spacing:0.13px;transform-origin:100% 0;-webkit-text-stroke:0.25px #000;"><span>4.375.000,00</span></div>
<div class="t" style="left:-418px;width:1000px;text-align:right;top:552.00px;font-size:12.5px;line-height:12.5px;color:#000;letter-spacing:0.13px;transform-origin:100% 0;-webkit-text-stroke:0.25px #000;"><span>245.625.000,00</span></div>
<div class="t" style="left:-247px;width:1000px;text-align:right;top:552.00px;font-size:12.5px;line-height:12.5px;color:#000;letter-spacing:0.13px;transform-origin:100% 0;-webkit-text-stroke:0.25px #000;"><span>245.625.000,00</span></div>
<div class="t" style="left:-864px;width:1000px;text-align:right;top:572.00px;font-size:12.5px;line-height:12.5px;color:#000;letter-spacing:0.13px;transform-origin:100% 0;-webkit-text-stroke:0.25px #000;"><span>100.000.000,00</span></div>
<div class="t" style="left:146.5px;top:572.00px;font-size:12.5px;line-height:12.5px;color:#000;letter-spacing:0.45px;transform-origin:0 0;-webkit-text-stroke:0.25px #000;">26/06/2025</div>
<div class="t" style="left:-682px;width:1000px;text-align:right;top:572.00px;font-size:12.5px;line-height:12.5px;color:#000;letter-spacing:0.13px;transform-origin:100% 0;-webkit-text-stroke:0.25px #000;"><span>98.250.000,00</span></div>
<div class="t" style="left:-614px;width:1000px;text-align:right;top:572.00px;font-size:12.5px;line-height:12.5px;color:#000;letter-spacing:0.13px;transform-origin:100% 0;-webkit-text-stroke:0.25px #000;"><span>1,75%</span></div>
<div class="t" style="left:-525px;width:1000px;text-align:right;top:572.00px;font-size:12.5px;line-height:12.5px;color:#000;letter-spacing:0.13px;transform-origin:100% 0;-webkit-text-stroke:0.25px #000;"><span>1.750.000,00</span></div>
<div class="t" style="left:-418px;width:1000px;text-align:right;top:572.00px;font-size:12.5px;line-height:12.5px;color:#000;letter-spacing:0.13px;transform-origin:100% 0;-webkit-text-stroke:0.25px #000;"><span>98.250.000,00</span></div>
<div class="t" style="left:-247px;width:1000px;text-align:right;top:572.00px;font-size:12.5px;line-height:12.5px;color:#000;letter-spacing:0.13px;transform-origin:100% 0;-webkit-text-stroke:0.25px #000;"><span>98.250.000,00</span></div>
<div class="t" style="left:-864px;width:1000px;text-align:right;top:592.00px;font-size:12.5px;line-height:12.5px;color:#000;letter-spacing:0.13px;transform-origin:100% 0;-webkit-text-stroke:0.25px #000;"><span>25.000.000,00</span></div>
<div class="t" style="left:-614px;width:1000px;text-align:right;top:592.00px;font-size:12.5px;line-height:12.5px;color:#000;letter-spacing:0.13px;transform-origin:100% 0;-webkit-text-stroke:0.25px #000;"><span>1,75%</span></div>
<div class="t" style="left:-525px;width:1000px;text-align:right;top:592.00px;font-size:12.5px;line-height:12.5px;color:#000;letter-spacing:0.13px;transform-origin:100% 0;-webkit-text-stroke:0.25px #000;"><span>437.500,00</span></div>
<div class="t" style="left:-418px;width:1000px;text-align:right;top:592.00px;font-size:12.5px;line-height:12.5px;color:#000;letter-spacing:0.13px;transform-origin:100% 0;-webkit-text-stroke:0.25px #000;"><span>24.562.500,00</span></div>
<div class="t" style="left:-247px;width:1000px;text-align:right;top:592.00px;font-size:12.5px;line-height:12.5px;color:#000;letter-spacing:0.13px;transform-origin:100% 0;-webkit-text-stroke:0.25px #000;"><span>24.562.500,00</span></div>
<div class="t" style="left:-864px;width:1000px;text-align:right;top:612.00px;font-size:12.5px;line-height:12.5px;color:#000;letter-spacing:0.13px;transform-origin:100% 0;-webkit-text-stroke:0.25px #000;"><span>55.000.000,00</span></div>
<div class="t" style="left:-614px;width:1000px;text-align:right;top:612.00px;font-size:12.5px;line-height:12.5px;color:#000;letter-spacing:0.13px;transform-origin:100% 0;-webkit-text-stroke:0.25px #000;"><span>1,75%</span></div>
<div class="t" style="left:-525px;width:1000px;text-align:right;top:612.00px;font-size:12.5px;line-height:12.5px;color:#000;letter-spacing:0.13px;transform-origin:100% 0;-webkit-text-stroke:0.25px #000;"><span>962.500,00</span></div>
<div class="t" style="left:-418px;width:1000px;text-align:right;top:612.00px;font-size:12.5px;line-height:12.5px;color:#000;letter-spacing:0.13px;transform-origin:100% 0;-webkit-text-stroke:0.25px #000;"><span>54.037.500,00</span></div>
<div class="t" style="left:-247px;width:1000px;text-align:right;top:612.00px;font-size:12.5px;line-height:12.5px;color:#000;letter-spacing:0.13px;transform-origin:100% 0;-webkit-text-stroke:0.25px #000;"><span>54.037.500,00</span></div>
<div class="t" style="left:-864px;width:1000px;text-align:right;top:632.00px;font-size:12.5px;line-height:12.5px;color:#000;font-weight:bold;letter-spacing:0.13px;transform-origin:100% 0;-webkit-text-stroke:0.25px #000;"><span>3.346.280.000,00</span></div>
<div class="t" style="left:-151px;width:1000px;text-align:right;top:692.00px;font-size:12.5px;line-height:12.5px;color:#000;letter-spacing:0.13px;transform-origin:100% 0;-webkit-text-stroke:0.25px #000;"><span>4</span></div>
<div class="t" style="left:854.5px;top:692.00px;font-size:12.5px;line-height:12.5px;color:#000;letter-spacing:0.2px;transform-origin:0 0;-webkit-text-stroke:0.25px #000;">BCA-THJ/2025/4</div>
<div class="t" style="left:977px;top:692.00px;font-size:12.5px;line-height:12.5px;color:#000;letter-spacing:0.45px;transform-origin:0 0;-webkit-text-stroke:0.25px #000;">24/02/2025</div>
<div class="t" style="left:1051px;top:692.00px;font-size:12.5px;line-height:12.5px;color:#000;transform-origin:0 0;-webkit-text-stroke:0.25px #000;">1000.03</div>
<div class="t" style="left:1104px;top:692.00px;font-size:12.5px;line-height:12.5px;color:#000;transform-origin:0 0;-webkit-text-stroke:0.25px #000;">4000.02</div>
<div class="t" style="left:1157px;top:692.00px;font-size:12.5px;line-height:12.5px;color:#000;transform-origin:0 0;-webkit-text-stroke:0.25px #000;">PRIMA USAHA ERA MA</div>
<div class="t" style="left:556px;width:1000px;text-align:right;top:692.00px;font-size:12.5px;line-height:12.5px;color:#000;letter-spacing:0.13px;transform-origin:100% 0;-webkit-text-stroke:0.25px #000;"><span>245.625.000,00</span></div>
<div class="t" style="left:-151px;width:1000px;text-align:right;top:712.00px;font-size:12.5px;line-height:12.5px;color:#000;letter-spacing:0.13px;transform-origin:100% 0;-webkit-text-stroke:0.25px #000;"><span>14</span></div>
<div class="t" style="left:854.5px;top:712.00px;font-size:12.5px;line-height:12.5px;color:#000;letter-spacing:0.2px;transform-origin:0 0;-webkit-text-stroke:0.25px #000;">BCA-THJ/2025/14</div>
<div class="t" style="left:977px;top:712.00px;font-size:12.5px;line-height:12.5px;color:#000;letter-spacing:0.45px;transform-origin:0 0;-webkit-text-stroke:0.25px #000;">27/02/2025</div>
<div class="t" style="left:1051px;top:712.00px;font-size:12.5px;line-height:12.5px;color:#000;transform-origin:0 0;-webkit-text-stroke:0.25px #000;">1000.03</div>
<div class="t" style="left:1104px;top:712.00px;font-size:12.5px;line-height:12.5px;color:#000;transform-origin:0 0;-webkit-text-stroke:0.25px #000;">4000.02</div>
<div class="t" style="left:1157px;top:712.00px;font-size:12.5px;line-height:12.5px;color:#000;transform-origin:0 0;-webkit-text-stroke:0.25px #000;">adv25020408PRIMA USAHA ERA MA</div>
<div class="t" style="left:556px;width:1000px;text-align:right;top:712.00px;font-size:12.5px;line-height:12.5px;color:#000;letter-spacing:0.13px;transform-origin:100% 0;-webkit-text-stroke:0.25px #000;"><span>196.500.000,00</span></div>
<div class="t" style="left:-151px;width:1000px;text-align:right;top:732.00px;font-size:12.5px;line-height:12.5px;color:#000;letter-spacing:0.13px;transform-origin:100% 0;-webkit-text-stroke:0.25px #000;"><span>33</span></div>
<div class="t" style="left:854.5px;top:732.00px;font-size:12.5px;line-height:12.5px;color:#000;letter-spacing:0.2px;transform-origin:0 0;-webkit-text-stroke:0.25px #000;">BCA-THJ/2025/33</div>
<div class="t" style="left:977px;top:732.00px;font-size:12.5px;line-height:12.5px;color:#000;letter-spacing:0.45px;transform-origin:0 0;-webkit-text-stroke:0.25px #000;">12/03/2025</div>
<div class="t" style="left:1051px;top:732.00px;font-size:12.5px;line-height:12.5px;color:#000;transform-origin:0 0;-webkit-text-stroke:0.25px #000;">1000.03</div>
<div class="t" style="left:1104px;top:732.00px;font-size:12.5px;line-height:12.5px;color:#000;transform-origin:0 0;-webkit-text-stroke:0.25px #000;">4000.02</div>
<div class="t" style="left:1157px;top:732.00px;font-size:12.5px;line-height:12.5px;color:#000;transform-origin:0 0;-webkit-text-stroke:0.25px #000;">adv25020552PRIMA USAHA ERA MA</div>
<div class="t" style="left:556px;width:1000px;text-align:right;top:732.00px;font-size:12.5px;line-height:12.5px;color:#000;letter-spacing:0.13px;transform-origin:100% 0;-webkit-text-stroke:0.25px #000;"><span>294.750.000,00</span></div>
<div class="t" style="left:-151px;width:1000px;text-align:right;top:752.00px;font-size:12.5px;line-height:12.5px;color:#000;letter-spacing:0.13px;transform-origin:100% 0;-webkit-text-stroke:0.25px #000;"><span>54</span></div>
<div class="t" style="left:854.5px;top:752.00px;font-size:12.5px;line-height:12.5px;color:#000;letter-spacing:0.2px;transform-origin:0 0;-webkit-text-stroke:0.25px #000;">BCA-THJ/2025/54</div>
<div class="t" style="left:977px;top:752.00px;font-size:12.5px;line-height:12.5px;color:#000;letter-spacing:0.45px;transform-origin:0 0;-webkit-text-stroke:0.25px #000;">19/03/2025</div>
<div class="t" style="left:1051px;top:752.00px;font-size:12.5px;line-height:12.5px;color:#000;transform-origin:0 0;-webkit-text-stroke:0.25px #000;">1000.03</div>
<div class="t" style="left:1104px;top:752.00px;font-size:12.5px;line-height:12.5px;color:#000;transform-origin:0 0;-webkit-text-stroke:0.25px #000;">1100.03</div>
<div class="t" style="left:1157px;top:752.00px;font-size:12.5px;line-height:12.5px;color:#000;transform-origin:0 0;-webkit-text-stroke:0.25px #000;">WIDJONO GOZALI</div>
<div class="t" style="left:556px;width:1000px;text-align:right;top:752.00px;font-size:12.5px;line-height:12.5px;color:#000;letter-spacing:0.13px;transform-origin:100% 0;-webkit-text-stroke:0.25px #000;"><span>3.500.000,00</span></div>
<div class="t" style="left:-151px;width:1000px;text-align:right;top:772.00px;font-size:12.5px;line-height:12.5px;color:#000;letter-spacing:0.13px;transform-origin:100% 0;-webkit-text-stroke:0.25px #000;"><span>93</span></div>
<div class="t" style="left:854.5px;top:772.00px;font-size:12.5px;line-height:12.5px;color:#000;letter-spacing:0.2px;transform-origin:0 0;-webkit-text-stroke:0.25px #000;">BCA-THJ/2025/93</div>
<div class="t" style="left:977px;top:772.00px;font-size:12.5px;line-height:12.5px;color:#000;letter-spacing:0.45px;transform-origin:0 0;-webkit-text-stroke:0.25px #000;">23/04/2025</div>
<div class="t" style="left:1051px;top:772.00px;font-size:12.5px;line-height:12.5px;color:#000;transform-origin:0 0;-webkit-text-stroke:0.25px #000;">1000.03</div>
<div class="t" style="left:1104px;top:772.00px;font-size:12.5px;line-height:12.5px;color:#000;transform-origin:0 0;-webkit-text-stroke:0.25px #000;">4000.02</div>
<div class="t" style="left:1157px;top:772.00px;font-size:12.5px;line-height:12.5px;color:#000;transform-origin:0 0;-webkit-text-stroke:0.25px #000;">adv25020805PRIMA USAHA ERA MA</div>
<div class="t" style="left:556px;width:1000px;text-align:right;top:772.00px;font-size:12.5px;line-height:12.5px;color:#000;letter-spacing:0.13px;transform-origin:100% 0;-webkit-text-stroke:0.25px #000;"><span>98.250.000,00</span></div>
<div class="t" style="left:-151px;width:1000px;text-align:right;top:792.00px;font-size:12.5px;line-height:12.5px;color:#000;letter-spacing:0.13px;transform-origin:100% 0;-webkit-text-stroke:0.25px #000;"><span>115</span></div>
<div class="t" style="left:854.5px;top:792.00px;font-size:12.5px;line-height:12.5px;color:#000;letter-spacing:0.2px;transform-origin:0 0;-webkit-text-stroke:0.25px #000;">BCA-THJ/2025/115</div>
<div class="t" style="left:977px;top:792.00px;font-size:12.5px;line-height:12.5px;color:#000;letter-spacing:0.45px;transform-origin:0 0;-webkit-text-stroke:0.25px #000;">05/05/2025</div>
<div class="t" style="left:1051px;top:792.00px;font-size:12.5px;line-height:12.5px;color:#000;transform-origin:0 0;-webkit-text-stroke:0.25px #000;">1000.03</div>
<div class="t" style="left:1104px;top:792.00px;font-size:12.5px;line-height:12.5px;color:#000;transform-origin:0 0;-webkit-text-stroke:0.25px #000;">4000.02</div>
<div class="t" style="left:1157px;top:792.00px;font-size:12.5px;line-height:12.5px;color:#000;transform-origin:0 0;-webkit-text-stroke:0.25px #000;">adv25020977PRIMA USAHA ERA MA</div>
<div class="t" style="left:556px;width:1000px;text-align:right;top:792.00px;font-size:12.5px;line-height:12.5px;color:#000;letter-spacing:0.13px;transform-origin:100% 0;-webkit-text-stroke:0.25px #000;"><span>147.375.000,00</span></div>
<div class="t" style="left:-151px;width:1000px;text-align:right;top:812.00px;font-size:12.5px;line-height:12.5px;color:#000;letter-spacing:0.13px;transform-origin:100% 0;-webkit-text-stroke:0.25px #000;"><span>133</span></div>
<div class="t" style="left:854.5px;top:812.00px;font-size:12.5px;line-height:12.5px;color:#000;letter-spacing:0.2px;transform-origin:0 0;-webkit-text-stroke:0.25px #000;">BCA-THJ/2025/133</div>
<div class="t" style="left:977px;top:812.00px;font-size:12.5px;line-height:12.5px;color:#000;letter-spacing:0.45px;transform-origin:0 0;-webkit-text-stroke:0.25px #000;">13/05/2025</div>
<div class="t" style="left:1051px;top:812.00px;font-size:12.5px;line-height:12.5px;color:#000;transform-origin:0 0;-webkit-text-stroke:0.25px #000;">1000.03</div>
<div class="t" style="left:1104px;top:812.00px;font-size:12.5px;line-height:12.5px;color:#000;transform-origin:0 0;-webkit-text-stroke:0.25px #000;">4000.02</div>
<div class="t" style="left:1157px;top:812.00px;font-size:12.5px;line-height:12.5px;color:#000;transform-origin:0 0;-webkit-text-stroke:0.25px #000;">adv25021017PRIMA USAHA ERA MA</div>
<div class="t" style="left:556px;width:1000px;text-align:right;top:812.00px;font-size:12.5px;line-height:12.5px;color:#000;letter-spacing:0.13px;transform-origin:100% 0;-webkit-text-stroke:0.25px #000;"><span>196.500.000,00</span></div>
<div class="t" style="left:-151px;width:1000px;text-align:right;top:832.00px;font-size:12.5px;line-height:12.5px;color:#000;letter-spacing:0.13px;transform-origin:100% 0;-webkit-text-stroke:0.25px #000;"><span>151</span></div>
<div class="t" style="left:854.5px;top:832.00px;font-size:12.5px;line-height:12.5px;color:#000;letter-spacing:0.2px;transform-origin:0 0;-webkit-text-stroke:0.25px #000;">BCA-THJ/2025/151</div>
<div class="t" style="left:977px;top:832.00px;font-size:12.5px;line-height:12.5px;color:#000;letter-spacing:0.45px;transform-origin:0 0;-webkit-text-stroke:0.25px #000;">20/05/2025</div>
<div class="t" style="left:1051px;top:832.00px;font-size:12.5px;line-height:12.5px;color:#000;transform-origin:0 0;-webkit-text-stroke:0.25px #000;">1000.03</div>
<div class="t" style="left:1104px;top:832.00px;font-size:12.5px;line-height:12.5px;color:#000;transform-origin:0 0;-webkit-text-stroke:0.25px #000;">4000.02</div>
<div class="t" style="left:1157px;top:832.00px;font-size:12.5px;line-height:12.5px;color:#000;transform-origin:0 0;-webkit-text-stroke:0.25px #000;">PRIMA USAHA ERA MA</div>
<div class="t" style="left:556px;width:1000px;text-align:right;top:832.00px;font-size:12.5px;line-height:12.5px;color:#000;letter-spacing:0.13px;transform-origin:100% 0;-webkit-text-stroke:0.25px #000;"><span>98.250.000,00</span></div>
<div class="t" style="left:-151px;width:1000px;text-align:right;top:852.00px;font-size:12.5px;line-height:12.5px;color:#000;letter-spacing:0.13px;transform-origin:100% 0;-webkit-text-stroke:0.25px #000;"><span>172</span></div>
<div class="t" style="left:854.5px;top:852.00px;font-size:12.5px;line-height:12.5px;color:#000;letter-spacing:0.2px;transform-origin:0 0;-webkit-text-stroke:0.25px #000;">BCA-THJ/2025/172</div>
<div class="t" style="left:977px;top:852.00px;font-size:12.5px;line-height:12.5px;color:#000;letter-spacing:0.45px;transform-origin:0 0;-webkit-text-stroke:0.25px #000;">27/05/2025</div>
<div class="t" style="left:1051px;top:852.00px;font-size:12.5px;line-height:12.5px;color:#000;transform-origin:0 0;-webkit-text-stroke:0.25px #000;">1000.03</div>
<div class="t" style="left:1104px;top:852.00px;font-size:12.5px;line-height:12.5px;color:#000;transform-origin:0 0;-webkit-text-stroke:0.25px #000;">4000.02</div>
<div class="t" style="left:1157px;top:852.00px;font-size:12.5px;line-height:12.5px;color:#000;transform-origin:0 0;-webkit-text-stroke:0.25px #000;">adv25021173PRIMA USAHA ERA MA</div>
<div class="t" style="left:556px;width:1000px;text-align:right;top:852.00px;font-size:12.5px;line-height:12.5px;color:#000;letter-spacing:0.13px;transform-origin:100% 0;-webkit-text-stroke:0.25px #000;"><span>294.750.000,00</span></div>
<div class="t" style="left:-151px;width:1000px;text-align:right;top:872.00px;font-size:12.5px;line-height:12.5px;color:#000;letter-spacing:0.13px;transform-origin:100% 0;-webkit-text-stroke:0.25px #000;"><span>307</span></div>
<div class="t" style="left:854.5px;top:872.00px;font-size:12.5px;line-height:12.5px;color:#000;letter-spacing:0.2px;transform-origin:0 0;-webkit-text-stroke:0.25px #000;">BCA-THJ/2025/307</div>
<div class="t" style="left:977px;top:872.00px;font-size:12.5px;line-height:12.5px;color:#000;letter-spacing:0.45px;transform-origin:0 0;-webkit-text-stroke:0.25px #000;">16/06/2025</div>
<div class="t" style="left:1051px;top:872.00px;font-size:12.5px;line-height:12.5px;color:#000;transform-origin:0 0;-webkit-text-stroke:0.25px #000;">1000.03</div>
<div class="t" style="left:1104px;top:872.00px;font-size:12.5px;line-height:12.5px;color:#000;transform-origin:0 0;-webkit-text-stroke:0.25px #000;">4000.02</div>
<div class="t" style="left:1157px;top:872.00px;font-size:12.5px;line-height:12.5px;color:#000;transform-origin:0 0;-webkit-text-stroke:0.25px #000;">adv-25021278PRIMA USAHA ERA MA</div>
<div class="t" style="left:556px;width:1000px;text-align:right;top:872.00px;font-size:12.5px;line-height:12.5px;color:#000;letter-spacing:0.13px;transform-origin:100% 0;-webkit-text-stroke:0.25px #000;"><span>147.375.000,00</span></div>
<div class="t" style="left:-151px;width:1000px;text-align:right;top:892.00px;font-size:12.5px;line-height:12.5px;color:#000;letter-spacing:0.13px;transform-origin:100% 0;-webkit-text-stroke:0.25px #000;"><span>308</span></div>
<div class="t" style="left:854.5px;top:892.00px;font-size:12.5px;line-height:12.5px;color:#000;letter-spacing:0.2px;transform-origin:0 0;-webkit-text-stroke:0.25px #000;">BCA-THJ/2025/308</div>
<div class="t" style="left:977px;top:892.00px;font-size:12.5px;line-height:12.5px;color:#000;letter-spacing:0.45px;transform-origin:0 0;-webkit-text-stroke:0.25px #000;">16/06/2025</div>
<div class="t" style="left:1051px;top:892.00px;font-size:12.5px;line-height:12.5px;color:#000;transform-origin:0 0;-webkit-text-stroke:0.25px #000;">1000.03</div>
<div class="t" style="left:1104px;top:892.00px;font-size:12.5px;line-height:12.5px;color:#000;transform-origin:0 0;-webkit-text-stroke:0.25px #000;">4000.02</div>
<div class="t" style="left:1157px;top:892.00px;font-size:12.5px;line-height:12.5px;color:#000;transform-origin:0 0;-webkit-text-stroke:0.25px #000;">PT BUMI BERKAH BOG</div>
<div class="t" style="left:556px;width:1000px;text-align:right;top:892.00px;font-size:12.5px;line-height:12.5px;color:#000;letter-spacing:0.13px;transform-origin:100% 0;-webkit-text-stroke:0.25px #000;"><span>483.900.900,00</span></div>
<div class="t" style="left:1157px;top:912.00px;font-size:12.5px;line-height:12.5px;color:#000;transform-origin:0 0;-webkit-text-stroke:0.25px #000;">PT BUMI BERKAH BOG</div>
<div class="t" style="left:-151px;width:1000px;text-align:right;top:932.00px;font-size:12.5px;line-height:12.5px;color:#000;letter-spacing:0.13px;transform-origin:100% 0;-webkit-text-stroke:0.25px #000;"><span>375</span></div>
<div class="t" style="left:854.5px;top:932.00px;font-size:12.5px;line-height:12.5px;color:#000;letter-spacing:0.2px;transform-origin:0 0;-webkit-text-stroke:0.25px #000;">BCA-THJ/2025/375</div>
<div class="t" style="left:977px;top:932.00px;font-size:12.5px;line-height:12.5px;color:#000;letter-spacing:0.45px;transform-origin:0 0;-webkit-text-stroke:0.25px #000;">24/06/2025</div>
<div class="t" style="left:1051px;top:932.00px;font-size:12.5px;line-height:12.5px;color:#000;transform-origin:0 0;-webkit-text-stroke:0.25px #000;">1000.03</div>
<div class="t" style="left:1104px;top:932.00px;font-size:12.5px;line-height:12.5px;color:#000;transform-origin:0 0;-webkit-text-stroke:0.25px #000;">4000.02</div>
<div class="t" style="left:1157px;top:932.00px;font-size:12.5px;line-height:12.5px;color:#000;transform-origin:0 0;-webkit-text-stroke:0.25px #000;">adv25021358PRIMA USAHA ERA MA</div>
<div class="t" style="left:556px;width:1000px;text-align:right;top:932.00px;font-size:12.5px;line-height:12.5px;color:#000;letter-spacing:0.13px;transform-origin:100% 0;-webkit-text-stroke:0.25px #000;"><span>245.625.000,00</span></div>
<div class="t" style="left:-151px;width:1000px;text-align:right;top:952.00px;font-size:12.5px;line-height:12.5px;color:#000;letter-spacing:0.13px;transform-origin:100% 0;-webkit-text-stroke:0.25px #000;"><span>399</span></div>
<div class="t" style="left:854.5px;top:952.00px;font-size:12.5px;line-height:12.5px;color:#000;letter-spacing:0.2px;transform-origin:0 0;-webkit-text-stroke:0.25px #000;">BCA-THJ/2025/399</div>
<div class="t" style="left:977px;top:952.00px;font-size:12.5px;line-height:12.5px;color:#000;letter-spacing:0.45px;transform-origin:0 0;-webkit-text-stroke:0.25px #000;">25/06/2025</div>
<div class="t" style="left:1051px;top:952.00px;font-size:12.5px;line-height:12.5px;color:#000;transform-origin:0 0;-webkit-text-stroke:0.25px #000;">1000.03</div>
<div class="t" style="left:1104px;top:952.00px;font-size:12.5px;line-height:12.5px;color:#000;transform-origin:0 0;-webkit-text-stroke:0.25px #000;">4000.02</div>
<div class="t" style="left:1157px;top:952.00px;font-size:12.5px;line-height:12.5px;color:#000;transform-origin:0 0;-webkit-text-stroke:0.25px #000;">PT BUMI BERKAH BOG</div>
<div class="t" style="left:556px;width:1000px;text-align:right;top:952.00px;font-size:12.5px;line-height:12.5px;color:#000;letter-spacing:0.13px;transform-origin:100% 0;-webkit-text-stroke:0.25px #000;"><span>514.594.200,00</span></div>
<div class="r" style="left:851px;top:227px;width:2px;height:755px;background:#1e6b41;"></div>
<div class="r" style="left:973px;top:233px;width:2px;height:749px;background:#1e6b41;"></div>
<div class="r" style="left:970px;top:226px;width:7px;height:6px;background:#ffffff;"></div>
<div class="r" style="left:971px;top:227px;width:5px;height:4px;background:#1e6b41;"></div>
<div class="r" style="left:1899px;top:208px;width:21px;height:775px;background:#ffffff;"></div>
<div class="r" style="left:1902px;top:224px;width:15px;height:744px;background:#efefef;"></div>
<div class="r" style="left:1902px;top:209px;width:15px;height:15px;background:#fff;border:1px solid #6a6a6a;box-sizing:border-box;"></div>
<svg class="s" style="left:1905px;top:213px;" width="9" height="6" viewBox="0 0 9 6"><path d="M0.5 5.5L4.5 1.5 8.5 5.5z" fill="#111"/></svg>
<div class="r" style="left:1902px;top:266px;width:15px;height:519px;background:#ffffff;border:1px solid #6a6a6a;box-sizing:border-box;"></div>
<div class="r" style="left:1902px;top:968px;width:15px;height:15px;background:#fff;border:1px solid #6a6a6a;box-sizing:border-box;"></div>
<svg class="s" style="left:1905px;top:972px;" width="9" height="6" viewBox="0 0 9 6"><path d="M0.5 0.5L4.5 4.5 8.5 0.5z" fill="#111"/></svg>
<div class="r" style="left:0px;top:983px;width:1920px;height:28px;background:#f5f5f5;"></div>
<div class="r" style="left:0px;top:982px;width:1898px;height:1px;background:#c6c6c6;"></div>
<svg class="s" style="left:25px;top:991px;" width="8" height="10" viewBox="0 0 8 10"><path d="M6.5 1v8L1.5 5z" fill="#22553a"/></svg>
<svg class="s" style="left:54px;top:991px;" width="8" height="10" viewBox="0 0 8 10"><path d="M1.5 1v8L6.5 5z" fill="#22553a"/></svg>
<div class="r" style="left:81px;top:998px;width:2px;height:2px;background:#333;"></div>
<div class="r" style="left:85px;top:998px;width:2px;height:2px;background:#333;"></div>
<div class="r" style="left:89px;top:998px;width:2px;height:2px;background:#333;"></div>
<div class="r" style="left:100px;top:986px;width:1px;height:20px;background:#c6c6c6;"></div>
<div class="r" style="left:103px;top:985px;width:95px;height:22px;background:#1f4e8d;"></div>
<div class="t" id="f65" style="left:114.4px;top:990.00px;font-size:12.5px;line-height:12.5px;color:#ffffff;transform:scaleX(0.9599);transform-origin:0 0;-webkit-text-stroke:0.15px currentColor;">GL RK (YTD)</div>
<div class="r" style="left:203px;top:985px;width:105px;height:22px;background:#e56b1f;"></div>
<div class="t" id="f66" style="left:213.6px;top:990.00px;font-size:12.5px;line-height:12.5px;color:#ffffff;transform:scaleX(0.9502);transform-origin:0 0;-webkit-text-stroke:0.15px currentColor;">GL ACCURATE</div>
<div class="r" style="left:313px;top:985px;width:105px;height:22px;background:#e56b1f;"></div>
<div class="t" id="f67" style="left:323.4px;top:990.00px;font-size:12.5px;line-height:12.5px;color:#ffffff;transform:scaleX(0.9446);transform-origin:0 0;-webkit-text-stroke:0.15px currentColor;">TB ACCURATE</div>
<div class="r" style="left:423px;top:985px;width:104px;height:22px;background:#e56b1f;"></div>
<div class="t" id="f68" style="left:433.29999999999995px;top:990.00px;font-size:12.5px;line-height:12.5px;color:#ffffff;transform:scaleX(0.9359);transform-origin:0 0;-webkit-text-stroke:0.15px currentColor;">BS ACCURATE</div>
<div class="r" style="left:532px;top:985px;width:104px;height:22px;background:#e56b1f;"></div>
<div class="t" id="f69" style="left:542.6999999999999px;top:990.00px;font-size:12.5px;line-height:12.5px;color:#ffffff;transform:scaleX(0.9434);transform-origin:0 0;-webkit-text-stroke:0.15px currentColor;">PL ACCURATE</div>
<div class="r" style="left:641px;top:985px;width:34px;height:22px;background:#0070c0;"></div>
<div class="t" id="f70" style="left:649.4px;top:990.00px;font-size:12.5px;line-height:12.5px;color:#ffffff;transform:scaleX(0.9288);transform-origin:0 0;-webkit-text-stroke:0.15px currentColor;">BS</div>
<div class="r" style="left:680px;top:985px;width:34px;height:22px;background:#0070c0;"></div>
<div class="t" id="f71" style="left:689.1999999999999px;top:990.00px;font-size:12.5px;line-height:12.5px;color:#ffffff;transform:scaleX(0.9087);transform-origin:0 0;-webkit-text-stroke:0.15px currentColor;">PL</div>
<div class="r" style="left:200px;top:987px;width:1px;height:18px;background:#cfcfcf;"></div>
<div class="r" style="left:310px;top:987px;width:1px;height:18px;background:#cfcfcf;"></div>
<div class="r" style="left:420px;top:987px;width:1px;height:18px;background:#cfcfcf;"></div>
<div class="r" style="left:529px;top:987px;width:1px;height:18px;background:#cfcfcf;"></div>
<div class="r" style="left:638px;top:987px;width:1px;height:18px;background:#cfcfcf;"></div>
<div class="r" style="left:677px;top:987px;width:1px;height:18px;background:#cfcfcf;"></div>
<div class="r" style="left:716px;top:987px;width:1px;height:18px;background:#cfcfcf;"></div>
<div class="t" id="f72" style="left:730.4px;top:990.00px;font-size:12.5px;line-height:12.5px;color:#444;transform:scaleX(0.9337);transform-origin:0 0;-webkit-text-stroke:0.15px currentColor;">LIST BUPOT</div>
<div class="r" style="left:813px;top:982px;width:90px;height:25px;background:#ffffff;"></div>
<div class="r" style="left:813px;top:1004px;width:90px;height:3px;background:#1e7145;"></div>
<div class="t" id="f73" style="left:824.9px;top:990.00px;font-size:12.5px;line-height:12.5px;color:#1e7145;font-weight:bold;transform:scaleX(1.0680);transform-origin:0 0;-webkit-text-stroke:0.15px currentColor;-webkit-text-stroke:0.2px #1e7145;">INV vs UM</div>
<div class="t" id="f74" style="left:915.4px;top:990.00px;font-size:12.5px;line-height:12.5px;color:#444;transform:scaleX(1.0030);transform-origin:0 0;-webkit-text-stroke:0.15px currentColor;">UM vs BUPOT</div>
<div class="r" style="left:1011px;top:987px;width:1px;height:18px;background:#c6c6c6;"></div>
<div class="t" id="f75" style="left:1025.4px;top:990.00px;font-size:12.5px;line-height:12.5px;color:#444;transform:scaleX(0.9638);transform-origin:0 0;-webkit-text-stroke:0.15px currentColor;">REKAPAN</div>
<div class="r" style="left:1092px;top:998px;width:2px;height:2px;background:#333;"></div>
<div class="r" style="left:1096px;top:998px;width:2px;height:2px;background:#333;"></div>
<div class="r" style="left:1100px;top:998px;width:2px;height:2px;background:#333;"></div>
<svg class="s" style="left:1114px;top:986px;" width="20" height="20" viewBox="0 0 20 20"><circle cx="10" cy="10" r="7.8" fill="none" stroke="#555" stroke-width="1.3"/><path d="M10 5.8v8.4M5.8 10h8.4" stroke="#555" stroke-width="1.5"/></svg>
<div class="r" style="left:1152px;top:991px;width:2px;height:2px;background:#8a8a8a;"></div>
<div class="r" style="left:1152px;top:995px;width:2px;height:2px;background:#8a8a8a;"></div>
<div class="r" style="left:1152px;top:999px;width:2px;height:2px;background:#8a8a8a;"></div>
<div class="r" style="left:1170px;top:987px;width:15px;height:18px;background:#fff;border:1px solid #606060;box-sizing:border-box;"></div>
<svg class="s" style="left:1174px;top:991px;" width="8" height="10" viewBox="0 0 8 10"><path d="M5.5 1v8L1.5 5z" fill="#111"/></svg>
<div class="r" style="left:1282px;top:989px;width:603px;height:15px;background:#ffffff;border:1px solid #606060;box-sizing:border-box;"></div>
<div class="r" style="left:1884px;top:988px;width:15px;height:17px;background:#fff;border:1px solid #606060;box-sizing:border-box;"></div>
<svg class="s" style="left:1888px;top:991px;" width="8" height="10" viewBox="0 0 8 10"><path d="M2.5 1v8L6.5 5z" fill="#111"/></svg>
<div class="r" style="left:0px;top:1011px;width:1920px;height:21px;background:#217346;"></div>
<div class="t" id="f76" style="left:7px;top:1017.00px;font-size:11.5px;line-height:11.5px;color:#ffffff;transform:scaleX(0.9709);transform-origin:0 0;-webkit-text-stroke:0.15px currentColor;">Select destination and press ENTER or choose Paste</div>
<div class="t" id="f77" style="left:1552.1000000000001px;top:1016.00px;font-size:12px;line-height:12px;color:#ffffff;transform:scaleX(0.9645);transform-origin:0 0;-webkit-text-stroke:0.15px currentColor;">Count: 26</div>
<div class="r" style="left:1620px;top:1011px;width:40px;height:21px;background:#0f5a2f;"></div>
<svg class="s" style="left:1632px;top:1013px;" width="16" height="16" viewBox="0 0 16 16"><rect x="1.5" y="1.5" width="12" height="12" fill="none" stroke="#fff" stroke-width="1"/><path d="M5.5 1.5v12M9.5 1.5v12M1.5 5.5h12M1.5 9.5h12" stroke="#fff" stroke-width="1"/></svg>
<svg class="s" style="left:1672px;top:1013px;" width="16" height="16" viewBox="0 0 16 16"><rect x="1.5" y="1.5" width="13" height="12" fill="none" stroke="#fff" stroke-width="1"/><rect x="4.5" y="3.5" width="7" height="8" fill="none" stroke="#fff" stroke-width="1"/><path d="M6 6.5h4M6 8.5h4" stroke="#fff" stroke-width="0.9"/></svg>
<svg class="s" style="left:1712px;top:1013px;" width="16" height="16" viewBox="0 0 16 16"><rect x="1.5" y="1.5" width="13" height="12" fill="none" stroke="#fff" stroke-width="1"/><path d="M1.5 7.5h5.5V1.5M7 4.5h3.5V1.5" fill="none" stroke="#fff" stroke-width="1"/></svg>
<div class="r" style="left:1746px;top:1020px;width:8px;height:1px;background:#fff;"></div>
<div class="r" style="left:1759px;top:1020px;width:100px;height:1px;background:#e6efe9;"></div>
<div class="r" style="left:1807px;top:1016px;width:5px;height:11px;background:#fff;"></div>
<div class="r" style="left:1864px;top:1020px;width:8px;height:1px;background:#fff;"></div>
<div class="r" style="left:1867px;top:1016px;width:1px;height:9px;background:#fff;"></div>
<div class="t" id="f78" style="left:1885.1000000000001px;top:1016.00px;font-size:12px;line-height:12px;color:#ffffff;transform:scaleX(0.8859);transform-origin:0 0;-webkit-text-stroke:0.15px currentColor;">100%</div>
<div class="r" style="left:0px;top:1032px;width:1920px;height:48px;background:#dadada;"></div>
<div class="r" style="left:0px;top:1032px;width:1920px;height:1px;background:#e4dede;"></div>
<svg class="s" style="left:18px;top:1044px;" width="26" height="24" viewBox="0 0 26 24"><circle cx="18" cy="7.5" r="5" fill="#f39a1e"/><path d="M4.5 20.5a4.5 4.5 0 0 1 1-9 6.5 6.5 0 0 1 12.5 1.5 4 4 0 0 1 2.5 7.5z" fill="#dfeafa" stroke="#a9c4e0" stroke-width="1"/></svg>
<div class="t" id="f79" style="left:50.199999999999996px;top:1042.00px;font-size:12.5px;line-height:12.5px;color:#1a1a1a;transform:scaleX(0.9163);transform-origin:0 0;-webkit-text-stroke:0.15px currentColor;">28°C</div>
<div class="t" id="f80" style="left:49.9px;top:1058.00px;font-size:12.5px;line-height:12.5px;color:#444;transform:scaleX(0.9322);transform-origin:0 0;-webkit-text-stroke:0.15px currentColor;">Berawan</div>
<svg class="s" style="left:639px;top:1045px;" width="23" height="23" viewBox="0 0 23 23"><rect x="0" y="0" width="11" height="11" fill="#1a8ee6"/><rect x="12" y="0" width="11" height="11" fill="#1a8ee6"/><rect x="0" y="12" width="11" height="11" fill="#127ad6"/><rect x="12" y="12" width="11" height="11" fill="#127ad6"/></svg>
<div class="r" style="left:676px;top:1041px;width:218px;height:30px;background:#f3f3f3;border-radius:15px;border:1px solid #cfcfcf;box-sizing:border-box;"></div>
<svg class="s" style="left:686px;top:1048px;" width="17" height="17" viewBox="0 0 17 17"><circle cx="7" cy="7" r="5.5" fill="none" stroke="#1a1a1a" stroke-width="1.7"/><path d="M11 11l4.5 4.5" stroke="#1a1a1a" stroke-width="1.9"/></svg>
<div class="t" id="f81" style="left:711.9px;top:1050.00px;font-size:13px;line-height:13px;color:#5a5a5a;transform:scaleX(0.9999);transform-origin:0 0;-webkit-text-stroke:0.15px currentColor;">Search</div>
<svg class="s" style="left:846px;top:1044px;" width="46" height="27" viewBox="0 0 46 27"><ellipse cx="24" cy="22.5" rx="21" ry="3" fill="#e6d3b0"/><path d="M3 9l4-5 4 1 3 3 13 1 5 2 2 4 1 6-1 1-2-5v7h-2l-1-5h-9l-1 5h-2l-1-6-3-3-4-2-3 0z" fill="#f2f0f6" stroke="#2e2a4a" stroke-width="0.8"/><path d="M7 4l1 5M10 5l0 5M14 8l1 7M17 9l0 8M20 9l0 8M23 9l0 7M26 10l1 6M29 11l1 5" stroke="#2e2a4a" stroke-width="1.4"/><path d="M33 12l2 8" stroke="#2e2a4a" stroke-width="1.6"/><circle cx="4" cy="10" r="1.3" fill="#2e2a4a"/></svg>
<svg class="s" style="left:907px;top:1045px;" width="24" height="22" viewBox="0 0 24 22"><rect x="6" y="0" width="17.5" height="16" fill="#f7f7f7" stroke="#e2e2e2" stroke-width="0.8"/><rect x="0" y="6" width="17.5" height="15.5" fill="#1e1e1e"/><rect x="6.5" y="6" width="11" height="10" fill="#c4c4c4"/></svg>
<svg class="s" style="left:950px;top:1044px;" width="26" height="23" viewBox="0 0 26 23"><defs><linearGradient id="cpa" x1="1" y1="0" x2="0" y2="1"><stop offset="0" stop-color="#1d4fd8"/><stop offset="0.45" stop-color="#2aa6e8"/><stop offset="0.8" stop-color="#62c64a"/><stop offset="1" stop-color="#d4c400"/></linearGradient><linearGradient id="cpb" x1="1" y1="0" x2="0" y2="1"><stop offset="0" stop-color="#9a4de8"/><stop offset="0.4" stop-color="#e04fd8"/><stop offset="0.7" stop-color="#ff5f7a"/><stop offset="1" stop-color="#f24f1f"/></linearGradient></defs><path d="M4 3.5Q5 1 8 1H15Q18 1 17 4L13.5 14Q12.5 16.5 9.5 16.5H4Q1 16.5 1.2 13.5Z" fill="url(#cpa)"/><path d="M9.5 19L13 8.5Q14 6 17 6H21.5Q25 6 24.2 9L21 19.5Q20 22 17 22H12Q9 22 9.5 19Z" fill="url(#cpb)"/></svg>
<svg class="s" style="left:994px;top:1043px;" width="26" height="26" viewBox="0 0 26 26"><defs><linearGradient id="edb" x1="0" y1="0" x2="0.3" y2="1"><stop offset="0" stop-color="#2fa8e8"/><stop offset="1" stop-color="#0b4fa8"/></linearGradient><linearGradient id="edg" x1="0" y1="0" x2="1" y2="0.6"><stop offset="0" stop-color="#1fb0e0"/><stop offset="1" stop-color="#58d860"/></linearGradient></defs><circle cx="12.5" cy="13" r="12" fill="url(#edb)"/><path d="M2 10C4 3 10 1 14 1 21 1 25 6 25 11 25 15 22 17 18.5 17H10.5C10.5 13 13 11.5 15.5 11.5 14 9 10 7 6 8 4 8.5 2.5 9.5 2 10Z" fill="url(#edg)"/><path d="M10.5 17C11 20.5 15 22.5 20.5 21" fill="none" stroke="#d6e8f4" stroke-width="1.4"/><ellipse cx="14.5" cy="14.5" rx="3.5" ry="2.2" fill="#d9eaf3"/></svg>
<svg class="s" style="left:1039px;top:1044px;" width="24" height="24" viewBox="0 0 24 24"><path d="M7.5 5a4.5 4 0 0 1 9 0" fill="none" stroke="#2aa0e0" stroke-width="2"/><rect x="1" y="5" width="22" height="18.5" rx="3" fill="#1f5ea8"/><rect x="7" y="9" width="4.5" height="4.5" fill="#f25022"/><rect x="12.5" y="9" width="4.5" height="4.5" fill="#7fba00"/><rect x="7" y="14.5" width="4.5" height="4.5" fill="#00a4ef"/><rect x="12.5" y="14.5" width="4.5" height="4.5" fill="#ffb900"/></svg>
<svg class="s" style="left:1082px;top:1044px;" width="26" height="24" viewBox="0 0 26 24"><path d="M12.5 1.5a10.5 10.5 0 0 0-9 15.8L2 22.5l5.3-1.5A10.5 10.5 0 1 0 12.5 1.5z" fill="none" stroke="#25a244" stroke-width="2.3"/><path d="M8.5 7.5c0 5 4 9 9 9l1-2-3-1.5-1 1c-2-1-3-2-4-4l1-1-1.5-3z" fill="#25a244"/></svg>
<svg class="s" style="left:1126px;top:1043px;" width="26" height="26" viewBox="0 0 26 26"><circle cx="13" cy="13" r="12" fill="#db4437"/><path d="M13 13L2.6 19A12 12 0 0 0 19 23.4z" fill="#0f9d58"/><path d="M13 13L19 23.4A12 12 0 0 0 23.4 7z" fill="#ffcd40"/><path d="M13 13L23.4 7A12 12 0 0 0 13 1z" fill="#db4437"/><circle cx="13" cy="13" r="5.6" fill="#fff"/><circle cx="13" cy="13" r="4.4" fill="#1a73e8"/></svg>
<svg class="s" style="left:1170px;top:1045px;" width="26" height="22" viewBox="0 0 26 22"><path d="M1 1h8l2 2.5h14v18H1z" fill="#e9b73a"/><path d="M1 6h24v15.5H1z" fill="#fcd55d"/><rect x="6" y="13.5" width="14" height="5" fill="#1f7ed6"/></svg>
<div class="r" style="left:1180px;top:1073px;width:6px;height:2px;background:#666;"></div>
<svg class="s" style="left:1214px;top:1043px;" width="26" height="26" viewBox="0 0 26 26"><circle cx="13" cy="13" r="12" fill="#db4437"/><path d="M13 13L2.6 19A12 12 0 0 0 19 23.4z" fill="#0f9d58"/><path d="M13 13L19 23.4A12 12 0 0 0 23.4 7z" fill="#ffcd40"/><path d="M13 13L23.4 7A12 12 0 0 0 13 1z" fill="#db4437"/><circle cx="13" cy="13" r="5.6" fill="#fff"/><circle cx="13" cy="13" r="4.4" fill="#1a73e8"/></svg>
<div class="r" style="left:1224px;top:1073px;width:6px;height:2px;background:#666;"></div>
<svg class="s" style="left:1226px;top:1038px;" width="19" height="19" viewBox="0 0 19 19"><circle cx="9.5" cy="9.5" r="8.5" fill="#c42b1c" stroke="#dadada" stroke-width="1"/><text x="9.5" y="13.5" font-size="10" fill="#fff" text-anchor="middle" font-family="Liberation Sans" font-weight="bold">D</text></svg>
<div class="r" style="left:1252px;top:1038px;width:36px;height:37px;background:#ececec;border-radius:5px;"></div>
<svg class="s" style="left:1258px;top:1045px;" width="26" height="22" viewBox="0 0 26 22"><rect x="7" y="0.5" width="18" height="21" rx="1.5" fill="#21a366"/><rect x="7" y="7.5" width="18" height="7" fill="#107c41"/><rect x="16" y="0.5" width="9" height="7" fill="#33c481"/><rect x="16" y="14.5" width="9" height="7" fill="#185c37"/><rect x="0.5" y="4.5" width="13" height="13" rx="1.5" fill="#107c41"/><text x="7" y="14.5" font-size="10" fill="#fff" text-anchor="middle" font-family="Liberation Sans" font-weight="bold">X</text></svg>
<div class="r" style="left:1263px;top:1072px;width:16px;height:3px;background:#1a73d0;border-radius:2px;"></div>
<svg class="s" style="left:1683px;top:1051px;" width="14" height="10" viewBox="0 0 14 10"><path d="M1.5 8l5.5-5.5L12.5 8" fill="none" stroke="#1a1a1a" stroke-width="1.3"/></svg>
<div class="t" id="f82" style="left:1716.1000000000001px;top:1051.00px;font-size:12px;line-height:12px;color:#1a1a1a;transform:scaleX(0.9148);transform-origin:0 0;-webkit-text-stroke:0.15px currentColor;">ENG</div>
<svg class="s" style="left:1756px;top:1046px;" width="20" height="19" viewBox="0 0 20 19"><rect x="1.5" y="3.5" width="12" height="9.5" fill="none" stroke="#1a1a1a" stroke-width="1.2"/><path d="M4.5 16.5h6.5M7.5 13v3.5" stroke="#1a1a1a" stroke-width="1.2"/><rect x="12.5" y="1" width="5" height="8" rx="1" fill="#dadada" stroke="#1a1a1a" stroke-width="1"/></svg>
<svg class="s" style="left:1781px;top:1049px;" width="19" height="14" viewBox="0 0 19 14"><path d="M1.5 4.5h3l4-3.5v12l-4-3.5h-3z" fill="none" stroke="#1a1a1a" stroke-width="1.2"/><path d="M11.5 4.5c1 1 1 4 0 5M14 3c1.8 2 1.8 6 0 8" fill="none" stroke="#9a9a9a" stroke-width="1"/></svg>
<div class="t" id="f83" style="left:1847.7px;top:1042.00px;font-size:12.5px;line-height:12.5px;color:#1a1a1a;transform:scaleX(0.9463);transform-origin:0 0;-webkit-text-stroke:0.15px currentColor;">10:24</div>
<div class="t" id="f84" style="left:1815.1000000000001px;top:1058.00px;font-size:12.5px;line-height:12.5px;color:#1a1a1a;transform:scaleX(0.9942);transform-origin:0 0;-webkit-text-stroke:0.15px currentColor;">31/01/2026</div>
<svg class="s" style="left:1884px;top:1047px;" width="18" height="18" viewBox="0 0 18 18"><path d="M3.5 12.5V8a5.5 5.5 0 0 1 11 0v4.5l1.5 1.5H2z" fill="#1a1a1a"/><path d="M7 15.5a2 2 0 0 0 4 0" fill="#1a1a1a"/><path d="M12 1.5h4l-4 4h4" fill="none" stroke="#1a1a1a" stroke-width="1"/></svg>
</body></html>
